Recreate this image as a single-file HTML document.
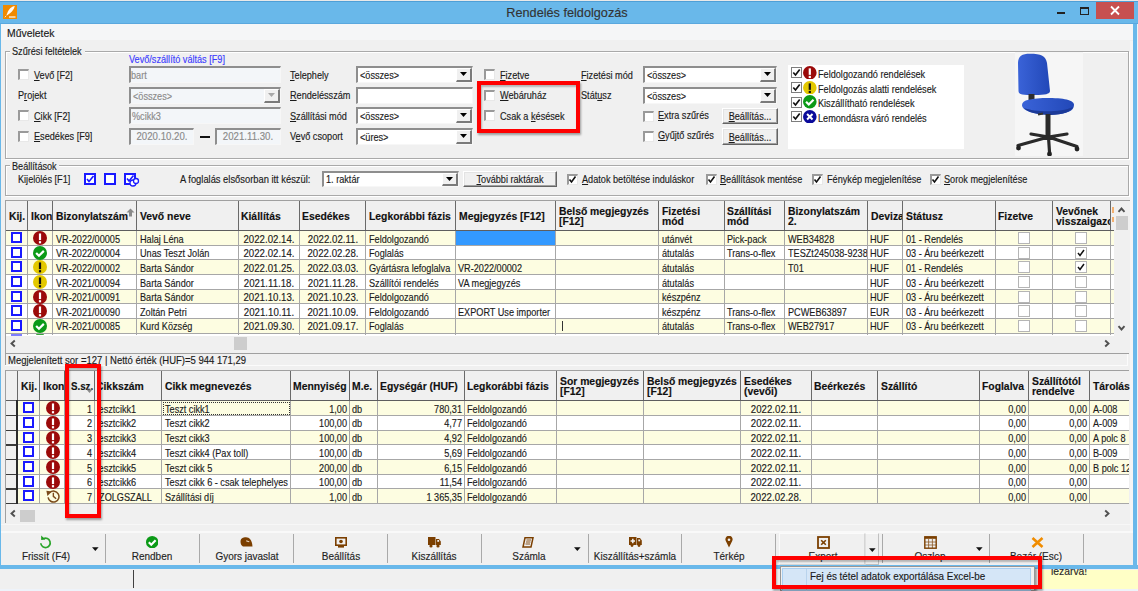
<!DOCTYPE html><html><head><meta charset="utf-8"><style>
html,body{margin:0;padding:0;}
body{width:1138px;height:591px;position:relative;overflow:hidden;background:#f0f0f0;font-family:"Liberation Sans",sans-serif;}
.t{position:absolute;white-space:nowrap;line-height:1;-webkit-text-stroke:0.15px currentColor;}
.t u{text-decoration:underline;text-underline-offset:1px;}
div{box-sizing:border-box;}
</style></head><body>
<div style="position:absolute;left:0px;top:0px;width:1138px;height:1px;background:#e9e9e9"></div>
<div style="position:absolute;left:0px;top:1px;width:1138px;height:23px;background:#69b8ea;border-top:1px solid #4f9fd6;border-bottom:1px solid #5aa8de"></div>
<div style="position:absolute;left:0px;top:24px;width:1px;height:545px;background:#69b8ea"></div>
<div style="position:absolute;left:1133px;top:24px;width:4px;height:545px;background:#69b8ea"></div>
<div style="position:absolute;left:1137px;top:24px;width:1px;height:567px;background:#eef2f6"></div>
<div style="position:absolute;left:0px;top:565px;width:1138px;height:4px;background:#69b8ea"></div>
<div style="position:absolute;left:3px;top:5px;width:14px;height:14px;background:#f08a00"></div>
<svg style="position:absolute;left:3px;top:5px" width="14" height="14"><path d="M11.8 1 C8.5 1.5 5.5 4 4 9 L3.2 10.5 L4.2 10.2 C5 9.5 6 9 7 8.2 C9.5 6.5 11 4 11.8 1Z" fill="#fff" opacity=".95"/><path d="M3 11 L1.8 12.2" stroke="#fff" stroke-width=".8"/><rect x="6" y="11.2" width="6.5" height="1.6" fill="#fff" opacity=".75"/></svg>
<div class="t" style="left:67px;width:1000px;text-align:center;transform-origin:50% 0;top:6.05px;font-size:13.5px;color:#333;transform:scaleX(0.94);">Rendelés feldolgozás</div>
<div style="position:absolute;left:1057px;top:12px;width:8px;height:2px;background:#222"></div>
<div style="position:absolute;left:1080px;top:7px;width:9px;height:8px;border:1px solid #222;border-top-width:2px"></div>
<div style="position:absolute;left:1096px;top:2px;width:38px;height:17px;background:#c75050"></div>
<svg style="position:absolute;left:1109px;top:5px" width="12" height="11"><path d="M2 1.5 L10 9.5 M10 1.5 L2 9.5" stroke="#fff" stroke-width="1.8"/></svg>
<div style="position:absolute;left:1px;top:24px;width:1132px;height:16px;background:#f5f6f7"></div>
<div class="t" style="left:7px;transform-origin:0 0;top:27.60px;font-size:10.5px;color:#1b1b1b;transform:scaleX(0.99);">Műveletek</div>
<div style="position:absolute;left:5px;top:50.5px;width:1124px;height:108px;border:1px solid #a9a9a9;box-shadow:inset 1px 1px 0 #fff, 1px 1px 0 #fff"></div>
<div style="position:absolute;left:10px;top:47.5px;width:75px;height:6px;background:#f0f0f0"></div>
<div class="t" style="left:12px;transform-origin:0 0;top:45.80px;font-size:10.5px;color:#1b1b1b;transform:scaleX(0.87);">Szűrési feltételek</div>
<div class="t" style="left:128.7px;transform-origin:0 0;top:54.10px;font-size:10.5px;color:#3c3cff;transform:scaleX(0.87);">Vevő/szállító váltás [F9]</div>
<div style="position:absolute;left:18px;top:69px;width:11px;height:11px;background:#fff;border-top:2px solid #9a9a9a;border-left:2px solid #9a9a9a;border-right:1px solid #e8e8e8;border-bottom:1px solid #e8e8e8"></div>
<div class="t" style="left:34px;transform-origin:0 0;top:69.60px;font-size:10.5px;color:#1b1b1b;transform:scaleX(0.87);"><u>V</u>evő [F2]</div>
<div class="t" style="left:18px;transform-origin:0 0;top:89.60px;font-size:10.5px;color:#1b1b1b;transform:scaleX(0.87);">P<u>r</u>ojekt</div>
<div style="position:absolute;left:18px;top:110px;width:11px;height:11px;background:#fff;border-top:2px solid #9a9a9a;border-left:2px solid #9a9a9a;border-right:1px solid #e8e8e8;border-bottom:1px solid #e8e8e8"></div>
<div class="t" style="left:34px;transform-origin:0 0;top:110.60px;font-size:10.5px;color:#1b1b1b;transform:scaleX(0.87);"><u>C</u>ikk [F2]</div>
<div style="position:absolute;left:18px;top:131px;width:11px;height:11px;background:#fff;border-top:2px solid #9a9a9a;border-left:2px solid #9a9a9a;border-right:1px solid #e8e8e8;border-bottom:1px solid #e8e8e8"></div>
<div class="t" style="left:34px;transform-origin:0 0;top:131.10px;font-size:10.5px;color:#1b1b1b;transform:scaleX(0.87);"><u>E</u>sedékes [F9]</div>
<div style="position:absolute;left:129px;top:66px;width:152px;height:17px;background:#f3f6f9;border-top:2px solid #8e8e8e;border-left:2px solid #8e8e8e;border-right:1px solid #f7f7f7;border-bottom:1px solid #f7f7f7"></div>
<div class="t" style="left:131px;transform-origin:0 0;top:69.60px;font-size:10.5px;color:#8a8a8a;transform:scaleX(0.87);">bart</div>
<div style="position:absolute;left:129px;top:87px;width:152px;height:17px;background:#f3f6f9;border-top:2px solid #8e8e8e;border-left:2px solid #8e8e8e;border-right:1px solid #f7f7f7;border-bottom:1px solid #f7f7f7"></div>
<div style="position:absolute;left:264px;top:89px;width:16px;height:14px;background:#f0f0f0;border-top:1px solid #fff;border-left:1px solid #fff;border-right:2px solid #7a7a7a;border-bottom:2px solid #7a7a7a"></div>
<svg style="position:absolute;left:267.5px;top:93.0px" width="8" height="5"><path d="M0 0 H7 L3.5 4Z" fill="#a8a8a8"/></svg>
<div class="t" style="left:133px;transform-origin:0 0;top:90.60px;font-size:10.5px;color:#8a8a8a;transform:scaleX(0.87);">&lt;összes&gt;</div>
<div style="position:absolute;left:129px;top:107px;width:152px;height:17px;background:#f3f6f9;border-top:2px solid #8e8e8e;border-left:2px solid #8e8e8e;border-right:1px solid #f7f7f7;border-bottom:1px solid #f7f7f7"></div>
<div class="t" style="left:131.5px;transform-origin:0 0;top:110.60px;font-size:10.5px;color:#8a8a8a;transform:scaleX(0.87);">%cikk3</div>
<div style="position:absolute;left:129px;top:128px;width:65px;height:17px;background:#f3f6f9;border-top:2px solid #8e8e8e;border-left:2px solid #8e8e8e;border-right:1px solid #f7f7f7;border-bottom:1px solid #f7f7f7"></div>
<div class="t" style="left:-338.5px;width:1000px;text-align:center;transform-origin:50% 0;top:131.10px;font-size:10.5px;color:#8a8a8a;transform:scaleX(0.92);">2020.10.20.</div>
<div style="position:absolute;left:200px;top:136px;width:10px;height:2px;background:#111"></div>
<div style="position:absolute;left:215px;top:128px;width:66px;height:17px;background:#f3f6f9;border-top:2px solid #8e8e8e;border-left:2px solid #8e8e8e;border-right:1px solid #f7f7f7;border-bottom:1px solid #f7f7f7"></div>
<div class="t" style="left:-252px;width:1000px;text-align:center;transform-origin:50% 0;top:131.10px;font-size:10.5px;color:#8a8a8a;transform:scaleX(0.92);">2021.11.30.</div>
<div class="t" style="left:290px;transform-origin:0 0;top:69.60px;font-size:10.5px;color:#1b1b1b;transform:scaleX(0.87);"><u>T</u>elephely</div>
<div class="t" style="left:290px;transform-origin:0 0;top:90.10px;font-size:10.5px;color:#1b1b1b;transform:scaleX(0.87);"><u>R</u>endelésszám</div>
<div class="t" style="left:290px;transform-origin:0 0;top:110.60px;font-size:10.5px;color:#1b1b1b;transform:scaleX(0.87);"><u>S</u>zállítási mód</div>
<div class="t" style="left:290px;transform-origin:0 0;top:131.10px;font-size:10.5px;color:#1b1b1b;transform:scaleX(0.87);">V<u>e</u>vő csoport</div>
<div style="position:absolute;left:356px;top:66px;width:117px;height:17px;background:#fff;border-top:2px solid #8e8e8e;border-left:2px solid #8e8e8e;border-right:1px solid #f7f7f7;border-bottom:1px solid #f7f7f7"></div>
<div style="position:absolute;left:456px;top:68px;width:16px;height:14px;background:#f0f0f0;border-top:1px solid #fff;border-left:1px solid #fff;border-right:2px solid #7a7a7a;border-bottom:2px solid #7a7a7a"></div>
<svg style="position:absolute;left:459.5px;top:72.0px" width="8" height="5"><path d="M0 0 H7 L3.5 4Z" fill="#000"/></svg>
<div class="t" style="left:360px;transform-origin:0 0;top:69.60px;font-size:10.5px;color:#1b1b1b;transform:scaleX(0.87);">&lt;összes&gt;</div>
<div style="position:absolute;left:356px;top:87px;width:117px;height:17px;background:#fff;border-top:2px solid #8e8e8e;border-left:2px solid #8e8e8e;border-right:1px solid #f7f7f7;border-bottom:1px solid #f7f7f7"></div>
<div style="position:absolute;left:356px;top:107px;width:117px;height:17px;background:#fff;border-top:2px solid #8e8e8e;border-left:2px solid #8e8e8e;border-right:1px solid #f7f7f7;border-bottom:1px solid #f7f7f7"></div>
<div style="position:absolute;left:456px;top:109px;width:16px;height:14px;background:#f0f0f0;border-top:1px solid #fff;border-left:1px solid #fff;border-right:2px solid #7a7a7a;border-bottom:2px solid #7a7a7a"></div>
<svg style="position:absolute;left:459.5px;top:113.0px" width="8" height="5"><path d="M0 0 H7 L3.5 4Z" fill="#000"/></svg>
<div class="t" style="left:360px;transform-origin:0 0;top:110.60px;font-size:10.5px;color:#1b1b1b;transform:scaleX(0.87);">&lt;összes&gt;</div>
<div style="position:absolute;left:356px;top:128px;width:117px;height:17px;background:#fff;border-top:2px solid #8e8e8e;border-left:2px solid #8e8e8e;border-right:1px solid #f7f7f7;border-bottom:1px solid #f7f7f7"></div>
<div style="position:absolute;left:456px;top:130px;width:16px;height:14px;background:#f0f0f0;border-top:1px solid #fff;border-left:1px solid #fff;border-right:2px solid #7a7a7a;border-bottom:2px solid #7a7a7a"></div>
<svg style="position:absolute;left:459.5px;top:134.0px" width="8" height="5"><path d="M0 0 H7 L3.5 4Z" fill="#000"/></svg>
<div class="t" style="left:360px;transform-origin:0 0;top:131.60px;font-size:10.5px;color:#1b1b1b;transform:scaleX(0.87);">&lt;üres&gt;</div>
<div style="position:absolute;left:484px;top:69px;width:11px;height:11px;background:#fff;border-top:2px solid #9a9a9a;border-left:2px solid #9a9a9a;border-right:1px solid #e8e8e8;border-bottom:1px solid #e8e8e8"></div>
<div class="t" style="left:500px;transform-origin:0 0;top:69.60px;font-size:10.5px;color:#1b1b1b;transform:scaleX(0.87);"><u>F</u>izetve</div>
<div style="position:absolute;left:484px;top:90px;width:11px;height:11px;background:#fff;border-top:2px solid #9a9a9a;border-left:2px solid #9a9a9a;border-right:1px solid #e8e8e8;border-bottom:1px solid #e8e8e8"></div>
<div class="t" style="left:500px;transform-origin:0 0;top:90.10px;font-size:10.5px;color:#1b1b1b;transform:scaleX(0.87);"><u>W</u>ebáruház</div>
<div style="position:absolute;left:484px;top:110px;width:11px;height:11px;background:#fff;border-top:2px solid #9a9a9a;border-left:2px solid #9a9a9a;border-right:1px solid #e8e8e8;border-bottom:1px solid #e8e8e8"></div>
<div class="t" style="left:500px;transform-origin:0 0;top:110.60px;font-size:10.5px;color:#1b1b1b;transform:scaleX(0.87);">Csak a <u>k</u>ésések</div>
<div class="t" style="left:580.5px;transform-origin:0 0;top:69.60px;font-size:10.5px;color:#1b1b1b;transform:scaleX(0.87);"><u>F</u>izetési mód</div>
<div class="t" style="left:580.5px;transform-origin:0 0;top:90.10px;font-size:10.5px;color:#1b1b1b;transform:scaleX(0.87);">Stát<u>u</u>sz</div>
<div style="position:absolute;left:643px;top:66px;width:134px;height:17px;background:#fff;border-top:2px solid #8e8e8e;border-left:2px solid #8e8e8e;border-right:1px solid #f7f7f7;border-bottom:1px solid #f7f7f7"></div>
<div style="position:absolute;left:760px;top:68px;width:16px;height:14px;background:#f0f0f0;border-top:1px solid #fff;border-left:1px solid #fff;border-right:2px solid #7a7a7a;border-bottom:2px solid #7a7a7a"></div>
<svg style="position:absolute;left:763.5px;top:72.0px" width="8" height="5"><path d="M0 0 H7 L3.5 4Z" fill="#000"/></svg>
<div class="t" style="left:647px;transform-origin:0 0;top:69.60px;font-size:10.5px;color:#1b1b1b;transform:scaleX(0.87);">&lt;összes&gt;</div>
<div style="position:absolute;left:643px;top:87px;width:134px;height:17px;background:#fff;border-top:2px solid #8e8e8e;border-left:2px solid #8e8e8e;border-right:1px solid #f7f7f7;border-bottom:1px solid #f7f7f7"></div>
<div style="position:absolute;left:760px;top:89px;width:16px;height:14px;background:#f0f0f0;border-top:1px solid #fff;border-left:1px solid #fff;border-right:2px solid #7a7a7a;border-bottom:2px solid #7a7a7a"></div>
<svg style="position:absolute;left:763.5px;top:93.0px" width="8" height="5"><path d="M0 0 H7 L3.5 4Z" fill="#000"/></svg>
<div class="t" style="left:647px;transform-origin:0 0;top:90.60px;font-size:10.5px;color:#1b1b1b;transform:scaleX(0.87);">&lt;összes&gt;</div>
<div style="position:absolute;left:643px;top:111px;width:11px;height:11px;background:#fff;border-top:2px solid #9a9a9a;border-left:2px solid #9a9a9a;border-right:1px solid #e8e8e8;border-bottom:1px solid #e8e8e8"></div>
<div class="t" style="left:657.8px;transform-origin:0 0;top:109.70px;font-size:10.5px;color:#1b1b1b;transform:scaleX(0.87);"><u>E</u>xtra szűrés</div>
<div style="position:absolute;left:643px;top:131px;width:11px;height:11px;background:#fff;border-top:2px solid #9a9a9a;border-left:2px solid #9a9a9a;border-right:1px solid #e8e8e8;border-bottom:1px solid #e8e8e8"></div>
<div class="t" style="left:657.8px;transform-origin:0 0;top:130.10px;font-size:10.5px;color:#1b1b1b;transform:scaleX(0.87);"><u>G</u>yűjtő szűrés</div>
<div style="position:absolute;left:722px;top:108px;width:56px;height:16px;background:#f0f0f0;border-top:1px solid #fff;border-left:1px solid #fff;border-right:1px solid #646464;border-bottom:1px solid #646464;box-shadow:inset -1px -1px 0 #a0a0a0, inset 1px 1px 0 #e3e3e3"></div>
<div class="t" style="left:250.0px;width:1000px;text-align:center;transform-origin:50% 0;top:111.30px;font-size:10.5px;color:#1b1b1b;transform:scaleX(0.87);"><u>B</u>eállítás...</div>
<div style="position:absolute;left:722px;top:128px;width:56px;height:17px;background:#f0f0f0;border-top:1px solid #fff;border-left:1px solid #fff;border-right:1px solid #646464;border-bottom:1px solid #646464;box-shadow:inset -1px -1px 0 #a0a0a0, inset 1px 1px 0 #e3e3e3"></div>
<div class="t" style="left:250.0px;width:1000px;text-align:center;transform-origin:50% 0;top:132.30px;font-size:10.5px;color:#1b1b1b;transform:scaleX(0.87);"><u>B</u>eállítás...</div>
<div style="position:absolute;left:788px;top:65px;width:176px;height:84px;background:#fff"></div>
<div style="position:absolute;left:791px;top:67px;width:11px;height:11px;background:#fff;border:1.5px solid #7d7d7d"></div>
<svg style="position:absolute;left:791px;top:67px" width="11" height="11"><path d="M2.3 5.5 L4.5 8 L8.7 2.6" stroke="#111" stroke-width="1.7" fill="none"/></svg>
<svg style="position:absolute;left:803.20px;top:65.80px" width="13.60" height="13.60"><circle cx="6.8" cy="6.8" r="6.8" fill="#9b0a0a"/><rect x="5.699999999999999" y="2.38" width="2.2" height="6.46" fill="#fff"/><rect x="5.699999999999999" y="9.86" width="2.2" height="2.2" fill="#fff"/></svg>
<div class="t" style="left:818px;transform-origin:0 0;top:68.90px;font-size:10.5px;color:#1b1b1b;transform:scaleX(0.87);">Feldolgozandó rendelések</div>
<div style="position:absolute;left:791px;top:82px;width:11px;height:11px;background:#fff;border:1.5px solid #7d7d7d"></div>
<svg style="position:absolute;left:791px;top:82px" width="11" height="11"><path d="M2.3 5.5 L4.5 8 L8.7 2.6" stroke="#111" stroke-width="1.7" fill="none"/></svg>
<svg style="position:absolute;left:803.20px;top:80.50px" width="13.60" height="13.60"><circle cx="6.8" cy="6.8" r="6.8" fill="#e3c800"/><rect x="5.699999999999999" y="2.38" width="2.2" height="6.46" fill="#111"/><rect x="5.699999999999999" y="9.86" width="2.2" height="2.2" fill="#111"/></svg>
<div class="t" style="left:818px;transform-origin:0 0;top:83.60px;font-size:10.5px;color:#1b1b1b;transform:scaleX(0.87);">Feldolgozás alatti rendelések</div>
<div style="position:absolute;left:791px;top:97px;width:11px;height:11px;background:#fff;border:1.5px solid #7d7d7d"></div>
<svg style="position:absolute;left:791px;top:97px" width="11" height="11"><path d="M2.3 5.5 L4.5 8 L8.7 2.6" stroke="#111" stroke-width="1.7" fill="none"/></svg>
<svg style="position:absolute;left:803.20px;top:95.20px" width="13.60" height="13.60"><circle cx="6.8" cy="6.8" r="6.8" fill="#0b9a17"/><path d="M3.06 6.8 L5.779999999999999 9.52 L10.54 4.76" stroke="#fff" stroke-width="2.2" fill="none"/></svg>
<div class="t" style="left:818px;transform-origin:0 0;top:98.30px;font-size:10.5px;color:#1b1b1b;transform:scaleX(0.87);">Kiszállítható rendelések</div>
<div style="position:absolute;left:791px;top:111px;width:11px;height:11px;background:#fff;border:1.5px solid #7d7d7d"></div>
<svg style="position:absolute;left:791px;top:111px" width="11" height="11"><path d="M2.3 5.5 L4.5 8 L8.7 2.6" stroke="#111" stroke-width="1.7" fill="none"/></svg>
<svg style="position:absolute;left:803.20px;top:109.90px" width="13.60" height="13.60"><circle cx="6.8" cy="6.8" r="6.8" fill="#0a0a9a"/><path d="M4.08 4.08 L9.52 9.52 M9.52 4.08 L4.08 9.52" stroke="#fff" stroke-width="2" fill="none"/></svg>
<div class="t" style="left:818px;transform-origin:0 0;top:113.00px;font-size:10.5px;color:#1b1b1b;transform:scaleX(0.87);">Lemondásra váró rendelés</div>
<div style="position:absolute;left:1015px;top:52px;width:68px;height:104px;background:#f6f6f6"></div>
<svg style="position:absolute;left:1015px;top:51px" width="68" height="105"><defs><linearGradient id="cb" x1="0" y1="0" x2="1" y2="0"><stop offset="0" stop-color="#3a63d8"/><stop offset="1" stop-color="#2248b8"/></linearGradient></defs><path d="M3 12 C3 5 7 2.7 15 2.7 C26 2.7 31 5 32 12 L35 40 C35 43 30 44 20 44 C8 44 3.5 44 3.5 40 Z" fill="url(#cb)"/><rect x="13.5" y="43" width="6" height="7" fill="#2e2e2e"/><path d="M7 54 C7 49 16 47 34 47 C52 47 59 50 59 54 C59 60 52 63 38 63.5 C20 64 7 60 7 54Z" fill="url(#cb)"/><path d="M9 57 C20 61 45 62 58 56 C56 61 48 63.5 36 64 C22 64 12 61 9 57Z" fill="#1c3a98"/><path d="M23 63.5 L28 62.5" stroke="#333" stroke-width="2.2"/><rect x="30.5" y="63" width="5" height="23" fill="#2a2a2a"/><path d="M33.5 86 L3 94.5 M33.5 86 L34.5 101 M33.5 86 L62 95.5 M33.5 86 L52 83 M33.5 86 L16 83" stroke="#2a2a2a" stroke-width="3.2" fill="none" stroke-linecap="round"/><circle cx="3.5" cy="97" r="2.4" fill="#222"/><circle cx="34.5" cy="103" r="2.4" fill="#222"/><circle cx="62" cy="98" r="2.4" fill="#222"/></svg>
<div style="position:absolute;left:5px;top:165px;width:1124px;height:31px;border:1px solid #a9a9a9;box-shadow:inset 1px 1px 0 #fff, 1px 1px 0 #fff"></div>
<div style="position:absolute;left:10px;top:162px;width:49px;height:6px;background:#f0f0f0"></div>
<div class="t" style="left:12px;transform-origin:0 0;top:160.60px;font-size:10.5px;color:#1b1b1b;transform:scaleX(0.87);">Beállítások</div>
<div class="t" style="left:18px;transform-origin:0 0;top:174.10px;font-size:10.5px;color:#1b1b1b;transform:scaleX(0.87);">Kijelölés [F1]</div>
<div style="position:absolute;left:84px;top:173px;width:11.5px;height:11.5px;background:#fff;border:2px solid #1a1aff"></div>
<svg style="position:absolute;left:84px;top:173px" width="12" height="12"><path d="M3 6 L5 8.5 L9.5 3" stroke="#1a1aff" stroke-width="1.6" fill="none"/></svg>
<div style="position:absolute;left:104px;top:173px;width:11.5px;height:11.5px;background:#fff;border:2px solid #1a1aff"></div>
<div style="position:absolute;left:124px;top:173px;width:11.5px;height:11.5px;background:#fff;border:2px solid #1a1aff"></div>
<svg style="position:absolute;left:124px;top:173px" width="16" height="16"><path d="M3 5.5 L5 8 L9.5 2.5" stroke="#1a1aff" stroke-width="1.6" fill="none"/><circle cx="9" cy="10" r="3" fill="#fff" stroke="#1a1aff" stroke-width="1.3"/><circle cx="12" cy="8" r="2.5" fill="#fff" stroke="#1a1aff" stroke-width="1.3"/></svg>
<div class="t" style="left:180.3px;transform-origin:0 0;top:174.10px;font-size:10.5px;color:#1b1b1b;transform:scaleX(0.89);">A foglalás elsősorban itt készül:</div>
<div style="position:absolute;left:322px;top:171px;width:137px;height:16px;background:#fff;border-top:2px solid #8e8e8e;border-left:2px solid #8e8e8e;border-right:1px solid #f7f7f7;border-bottom:1px solid #f7f7f7"></div>
<div style="position:absolute;left:442px;top:173px;width:16px;height:13px;background:#f0f0f0;border-top:1px solid #fff;border-left:1px solid #fff;border-right:2px solid #7a7a7a;border-bottom:2px solid #7a7a7a"></div>
<svg style="position:absolute;left:445.5px;top:176.5px" width="8" height="5"><path d="M0 0 H7 L3.5 4Z" fill="#000"/></svg>
<div class="t" style="left:326px;transform-origin:0 0;top:173.60px;font-size:10.5px;color:#1b1b1b;transform:scaleX(0.87);">1. raktár</div>
<div style="position:absolute;left:463px;top:171px;width:94px;height:16px;background:#f0f0f0;border-top:1px solid #fff;border-left:1px solid #fff;border-right:1px solid #646464;border-bottom:1px solid #646464;box-shadow:inset -1px -1px 0 #a0a0a0, inset 1px 1px 0 #e3e3e3"></div>
<div class="t" style="left:10.0px;width:1000px;text-align:center;transform-origin:50% 0;top:174.30px;font-size:10.5px;color:#1b1b1b;transform:scaleX(0.87);"><u>T</u>ovábbi raktárak</div>
<div style="position:absolute;left:567px;top:174px;width:11px;height:11px;background:#fff;border-top:2px solid #9a9a9a;border-left:2px solid #9a9a9a;border-right:1px solid #e8e8e8;border-bottom:1px solid #e8e8e8"></div>
<svg style="position:absolute;left:567px;top:174px" width="11" height="11"><path d="M2.5 5.5 L4.5 8 L8.5 2.5" stroke="#111" stroke-width="1.6" fill="none"/></svg>
<div class="t" style="left:582.1px;transform-origin:0 0;top:173.60px;font-size:10.5px;color:#1b1b1b;transform:scaleX(0.87);"><u>A</u>datok betöltése induláskor</div>
<div style="position:absolute;left:706px;top:174px;width:11px;height:11px;background:#fff;border-top:2px solid #9a9a9a;border-left:2px solid #9a9a9a;border-right:1px solid #e8e8e8;border-bottom:1px solid #e8e8e8"></div>
<svg style="position:absolute;left:706px;top:174px" width="11" height="11"><path d="M2.5 5.5 L4.5 8 L8.5 2.5" stroke="#111" stroke-width="1.6" fill="none"/></svg>
<div class="t" style="left:720px;transform-origin:0 0;top:173.60px;font-size:10.5px;color:#1b1b1b;transform:scaleX(0.87);"><u>B</u>eállítások mentése</div>
<div style="position:absolute;left:812px;top:174px;width:11px;height:11px;background:#fff;border-top:2px solid #9a9a9a;border-left:2px solid #9a9a9a;border-right:1px solid #e8e8e8;border-bottom:1px solid #e8e8e8"></div>
<svg style="position:absolute;left:812px;top:174px" width="11" height="11"><path d="M2.5 5.5 L4.5 8 L8.5 2.5" stroke="#111" stroke-width="1.6" fill="none"/></svg>
<div class="t" style="left:826.5px;transform-origin:0 0;top:173.60px;font-size:10.5px;color:#1b1b1b;transform:scaleX(0.87);">Fénykép megjelenítése</div>
<div style="position:absolute;left:930px;top:174px;width:11px;height:11px;background:#fff;border-top:2px solid #9a9a9a;border-left:2px solid #9a9a9a;border-right:1px solid #e8e8e8;border-bottom:1px solid #e8e8e8"></div>
<svg style="position:absolute;left:930px;top:174px" width="11" height="11"><path d="M2.5 5.5 L4.5 8 L8.5 2.5" stroke="#111" stroke-width="1.6" fill="none"/></svg>
<div class="t" style="left:944.3px;transform-origin:0 0;top:173.60px;font-size:10.5px;color:#1b1b1b;transform:scaleX(0.87);"><u>S</u>orok megjelenítése</div>
<div style="position:absolute;left:5.00px;top:200.10px;width:1125.00px;height:153.90px;background:#f0f0f0;border-left:1px solid #a0a0a0;border-top:1px solid #a0a0a0"></div>
<div style="position:absolute;left:6.00px;top:201.10px;width:1108.00px;height:29.10px;background:#f0f0f0"></div>
<div style="position:absolute;left:6.00px;top:229.70px;width:1108.00px;height:1.50px;background:#5e5e5e"></div>
<div style="position:absolute;left:6.00px;top:231.20px;width:1108.00px;height:14.00px;background:#fdfde1"></div>
<div style="position:absolute;left:6.00px;top:245.70px;width:1108.00px;height:14.10px;background:#fff"></div>
<div style="position:absolute;left:6.00px;top:260.30px;width:1108.00px;height:14.20px;background:#fdfde1"></div>
<div style="position:absolute;left:6.00px;top:275.00px;width:1108.00px;height:14.20px;background:#fff"></div>
<div style="position:absolute;left:6.00px;top:289.70px;width:1108.00px;height:14.10px;background:#fdfde1"></div>
<div style="position:absolute;left:6.00px;top:304.30px;width:1108.00px;height:14.10px;background:#fff"></div>
<div style="position:absolute;left:6.00px;top:318.90px;width:1108.00px;height:14.30px;background:#fdfde1"></div>
<div style="position:absolute;left:6.00px;top:333.50px;width:1108.00px;height:2.00px;background:#fff"></div>
<div style="position:absolute;left:6.00px;top:244.70px;width:1108.00px;height:1.00px;background:#a7a7a7"></div>
<div style="position:absolute;left:6.00px;top:259.30px;width:1108.00px;height:1.00px;background:#a7a7a7"></div>
<div style="position:absolute;left:6.00px;top:274.00px;width:1108.00px;height:1.00px;background:#a7a7a7"></div>
<div style="position:absolute;left:6.00px;top:288.70px;width:1108.00px;height:1.00px;background:#a7a7a7"></div>
<div style="position:absolute;left:6.00px;top:303.30px;width:1108.00px;height:1.00px;background:#a7a7a7"></div>
<div style="position:absolute;left:6.00px;top:317.90px;width:1108.00px;height:1.00px;background:#a7a7a7"></div>
<div style="position:absolute;left:6.00px;top:332.70px;width:1108.00px;height:1.00px;background:#a7a7a7"></div>
<div style="position:absolute;left:26.50px;top:201.10px;width:1.00px;height:29.10px;background:#6a6a6a"></div>
<div style="position:absolute;left:26.50px;top:231.20px;width:1.00px;height:104.30px;background:#a7a7a7"></div>
<div style="position:absolute;left:52.00px;top:201.10px;width:1.00px;height:29.10px;background:#6a6a6a"></div>
<div style="position:absolute;left:52.00px;top:231.20px;width:1.00px;height:104.30px;background:#a7a7a7"></div>
<div style="position:absolute;left:136.30px;top:201.10px;width:1.00px;height:29.10px;background:#6a6a6a"></div>
<div style="position:absolute;left:136.30px;top:231.20px;width:1.00px;height:104.30px;background:#a7a7a7"></div>
<div style="position:absolute;left:237.50px;top:201.10px;width:1.00px;height:29.10px;background:#6a6a6a"></div>
<div style="position:absolute;left:237.50px;top:231.20px;width:1.00px;height:104.30px;background:#a7a7a7"></div>
<div style="position:absolute;left:298.80px;top:201.10px;width:1.00px;height:29.10px;background:#6a6a6a"></div>
<div style="position:absolute;left:298.80px;top:231.20px;width:1.00px;height:104.30px;background:#a7a7a7"></div>
<div style="position:absolute;left:365.30px;top:201.10px;width:1.00px;height:29.10px;background:#6a6a6a"></div>
<div style="position:absolute;left:365.30px;top:231.20px;width:1.00px;height:104.30px;background:#a7a7a7"></div>
<div style="position:absolute;left:454.90px;top:201.10px;width:1.00px;height:29.10px;background:#6a6a6a"></div>
<div style="position:absolute;left:454.90px;top:231.20px;width:1.00px;height:104.30px;background:#a7a7a7"></div>
<div style="position:absolute;left:555.00px;top:201.10px;width:1.00px;height:29.10px;background:#6a6a6a"></div>
<div style="position:absolute;left:555.00px;top:231.20px;width:1.00px;height:104.30px;background:#a7a7a7"></div>
<div style="position:absolute;left:658.30px;top:201.10px;width:1.00px;height:29.10px;background:#6a6a6a"></div>
<div style="position:absolute;left:658.30px;top:231.20px;width:1.00px;height:104.30px;background:#a7a7a7"></div>
<div style="position:absolute;left:723.70px;top:201.10px;width:1.00px;height:29.10px;background:#6a6a6a"></div>
<div style="position:absolute;left:723.70px;top:231.20px;width:1.00px;height:104.30px;background:#a7a7a7"></div>
<div style="position:absolute;left:784.10px;top:201.10px;width:1.00px;height:29.10px;background:#6a6a6a"></div>
<div style="position:absolute;left:784.10px;top:231.20px;width:1.00px;height:104.30px;background:#a7a7a7"></div>
<div style="position:absolute;left:867.10px;top:201.10px;width:1.00px;height:29.10px;background:#6a6a6a"></div>
<div style="position:absolute;left:867.10px;top:231.20px;width:1.00px;height:104.30px;background:#a7a7a7"></div>
<div style="position:absolute;left:902.10px;top:201.10px;width:1.00px;height:29.10px;background:#6a6a6a"></div>
<div style="position:absolute;left:902.10px;top:231.20px;width:1.00px;height:104.30px;background:#a7a7a7"></div>
<div style="position:absolute;left:994.60px;top:201.10px;width:1.00px;height:29.10px;background:#6a6a6a"></div>
<div style="position:absolute;left:994.60px;top:231.20px;width:1.00px;height:104.30px;background:#a7a7a7"></div>
<div style="position:absolute;left:1052.20px;top:201.10px;width:1.00px;height:29.10px;background:#6a6a6a"></div>
<div style="position:absolute;left:1052.20px;top:231.20px;width:1.00px;height:104.30px;background:#a7a7a7"></div>
<div style="position:absolute;left:1110.40px;top:201.10px;width:1.00px;height:29.10px;background:#6a6a6a"></div>
<div style="position:absolute;left:1110.40px;top:231.20px;width:1.00px;height:104.30px;background:#a7a7a7"></div>
<div style="position:absolute;left:455.90px;top:231.20px;width:99.10px;height:13.50px;background:#3399ff"></div>
<div class="t" style="left:8.5px;transform-origin:0 0;top:211.34px;font-size:10.8px;color:#111;font-weight:bold;transform:scaleX(0.96);">Kij.</div>
<div style="position:absolute;left:28px;top:201px;width:24px;height:29px;overflow:hidden">
<div class="t" style="left:2.8px;transform-origin:0 0;top:10.34px;font-size:10.8px;color:#111;font-weight:bold;transform:scaleX(0.96);">Ikon</div>
</div>
<div class="t" style="left:55.5px;transform-origin:0 0;top:211.34px;font-size:10.8px;color:#111;font-weight:bold;transform:scaleX(0.96);">Bizonylatszám</div>
<svg style="position:absolute;left:126px;top:208px" width="9" height="9"><path d="M4.5 0.5 L8.5 4.5 H6 V8.5 H3 V4.5 H0.5Z" fill="#8a8a8a"/></svg>
<div class="t" style="left:139.5px;transform-origin:0 0;top:211.34px;font-size:10.8px;color:#111;font-weight:bold;transform:scaleX(0.96);">Vevő neve</div>
<div class="t" style="left:241px;transform-origin:0 0;top:211.34px;font-size:10.8px;color:#111;font-weight:bold;transform:scaleX(0.96);">Kiállítás</div>
<div class="t" style="left:302px;transform-origin:0 0;top:211.34px;font-size:10.8px;color:#111;font-weight:bold;transform:scaleX(0.96);">Esedékes</div>
<div class="t" style="left:368.5px;transform-origin:0 0;top:211.34px;font-size:10.8px;color:#111;font-weight:bold;transform:scaleX(0.96);">Legkorábbi fázis</div>
<div class="t" style="left:458.5px;transform-origin:0 0;top:211.34px;font-size:10.8px;color:#111;font-weight:bold;transform:scaleX(0.96);">Megjegyzés [F12]</div>
<div class="t" style="left:558.5px;transform-origin:0 0;top:205.84px;font-size:10.8px;color:#111;font-weight:bold;transform:scaleX(0.96);">Belső megjegyzés</div>
<div class="t" style="left:558.5px;transform-origin:0 0;top:216.24px;font-size:10.8px;color:#111;font-weight:bold;transform:scaleX(0.96);">[F12]</div>
<div class="t" style="left:661.5px;transform-origin:0 0;top:205.84px;font-size:10.8px;color:#111;font-weight:bold;transform:scaleX(0.96);">Fizetési</div>
<div class="t" style="left:661.5px;transform-origin:0 0;top:216.24px;font-size:10.8px;color:#111;font-weight:bold;transform:scaleX(0.96);">mód</div>
<div class="t" style="left:727px;transform-origin:0 0;top:205.84px;font-size:10.8px;color:#111;font-weight:bold;transform:scaleX(0.96);">Szállítási</div>
<div class="t" style="left:727px;transform-origin:0 0;top:216.24px;font-size:10.8px;color:#111;font-weight:bold;transform:scaleX(0.96);">mód</div>
<div class="t" style="left:787.5px;transform-origin:0 0;top:205.84px;font-size:10.8px;color:#111;font-weight:bold;transform:scaleX(0.96);">Bizonylatszám</div>
<div class="t" style="left:787.5px;transform-origin:0 0;top:216.24px;font-size:10.8px;color:#111;font-weight:bold;transform:scaleX(0.96);">2.</div>
<div style="position:absolute;left:868px;top:201px;width:34px;height:29px;overflow:hidden">
<div class="t" style="left:2.5px;transform-origin:0 0;top:10.34px;font-size:10.8px;color:#111;font-weight:bold;transform:scaleX(0.96);">Deviza</div>
</div>
<div class="t" style="left:905.5px;transform-origin:0 0;top:211.34px;font-size:10.8px;color:#111;font-weight:bold;transform:scaleX(0.96);">Státusz</div>
<div class="t" style="left:998px;transform-origin:0 0;top:211.34px;font-size:10.8px;color:#111;font-weight:bold;transform:scaleX(0.96);">Fizetve</div>
<div style="position:absolute;left:1053px;top:201px;width:57px;height:29px;overflow:hidden">
<div class="t" style="left:3px;transform-origin:0 0;top:4.84px;font-size:10.8px;color:#111;font-weight:bold;transform:scaleX(0.96);">Vevőnek</div>
<div class="t" style="left:3px;transform-origin:0 0;top:15.24px;font-size:10.8px;color:#111;font-weight:bold;transform:scaleX(0.96);">visszaigazolva</div>
</div>
<div style="position:absolute;left:1112.00px;top:207.00px;width:1.50px;height:6.00px;background:#f3b070"></div>
<div style="position:absolute;left:1112.00px;top:217.00px;width:1.50px;height:5.00px;background:#f3b070"></div>
<div style="position:absolute;left:10.5px;top:232px;width:11px;height:11px;background:#fff;border:2px solid #1a1aff"></div>
<svg style="position:absolute;left:33.00px;top:231.10px" width="14.00" height="14.00"><circle cx="7.0" cy="7.0" r="7.0" fill="#9b0a0a"/><rect x="5.9" y="2.4499999999999997" width="2.2" height="6.6499999999999995" fill="#fff"/><rect x="5.9" y="10.15" width="2.2" height="2.2" fill="#fff"/></svg>
<div class="t" style="left:55.5px;transform-origin:0 0;top:233.70px;font-size:10.5px;color:#1b1b1b;transform:scaleX(0.87);">VR-2022/00005</div>
<div class="t" style="left:139.5px;transform-origin:0 0;top:233.70px;font-size:10.5px;color:#1b1b1b;transform:scaleX(0.87);">Halaj Léna</div>
<div class="t" style="left:-231.5px;width:1000px;text-align:center;transform-origin:50% 0;top:233.70px;font-size:10.5px;color:#1b1b1b;transform:scaleX(0.92);">2022.02.14.</div>
<div class="t" style="left:-167.5px;width:1000px;text-align:center;transform-origin:50% 0;top:233.70px;font-size:10.5px;color:#1b1b1b;transform:scaleX(0.92);">2022.02.11.</div>
<div class="t" style="left:368.5px;transform-origin:0 0;top:233.70px;font-size:10.5px;color:#1b1b1b;transform:scaleX(0.87);">Feldolgozandó</div>
<div class="t" style="left:458px;transform-origin:0 0;top:233.70px;font-size:10.5px;color:#1b1b1b;transform:scaleX(0.87);"></div>
<div class="t" style="left:661.5px;transform-origin:0 0;top:233.70px;font-size:10.5px;color:#1b1b1b;transform:scaleX(0.87);">utánvét</div>
<div class="t" style="left:726.8px;transform-origin:0 0;top:233.70px;font-size:10.5px;color:#1b1b1b;transform:scaleX(0.87);">Pick-pack</div>
<div style="position:absolute;left:785px;top:230.70px;width:82px;height:14px;overflow:hidden">
<div class="t" style="left:2.5px;transform-origin:0 0;top:3.00px;font-size:10.5px;color:#1b1b1b;transform:scaleX(0.87);">WEB34828</div>
</div>
<div class="t" style="left:870px;transform-origin:0 0;top:233.70px;font-size:10.5px;color:#1b1b1b;transform:scaleX(0.87);">HUF</div>
<div class="t" style="left:905.5px;transform-origin:0 0;top:233.70px;font-size:10.5px;color:#1b1b1b;transform:scaleX(0.87);">01 - Rendelés</div>
<div style="position:absolute;left:1018px;top:232px;width:12px;height:12px;background:#fff;border:1px solid #b5b5b5"></div>
<div style="position:absolute;left:1075px;top:232px;width:12px;height:12px;background:#fff;border:1px solid #b5b5b5"></div>
<div style="position:absolute;left:10.5px;top:247px;width:11px;height:11px;background:#fff;border:2px solid #1a1aff"></div>
<svg style="position:absolute;left:33.00px;top:245.60px" width="14.00" height="14.00"><circle cx="7.0" cy="7.0" r="7.0" fill="#0b9a17"/><path d="M3.15 7.0 L5.95 9.799999999999999 L10.85 4.8999999999999995" stroke="#fff" stroke-width="2.2" fill="none"/></svg>
<div class="t" style="left:55.5px;transform-origin:0 0;top:248.20px;font-size:10.5px;color:#1b1b1b;transform:scaleX(0.87);">VR-2022/00004</div>
<div class="t" style="left:139.5px;transform-origin:0 0;top:248.20px;font-size:10.5px;color:#1b1b1b;transform:scaleX(0.87);">Unas Teszt Jolán</div>
<div class="t" style="left:-231.5px;width:1000px;text-align:center;transform-origin:50% 0;top:248.20px;font-size:10.5px;color:#1b1b1b;transform:scaleX(0.92);">2022.02.14.</div>
<div class="t" style="left:-167.5px;width:1000px;text-align:center;transform-origin:50% 0;top:248.20px;font-size:10.5px;color:#1b1b1b;transform:scaleX(0.92);">2022.02.28.</div>
<div class="t" style="left:368.5px;transform-origin:0 0;top:248.20px;font-size:10.5px;color:#1b1b1b;transform:scaleX(0.87);">Foglalás</div>
<div class="t" style="left:458px;transform-origin:0 0;top:248.20px;font-size:10.5px;color:#1b1b1b;transform:scaleX(0.87);"></div>
<div class="t" style="left:661.5px;transform-origin:0 0;top:248.20px;font-size:10.5px;color:#1b1b1b;transform:scaleX(0.87);">átutalás</div>
<div class="t" style="left:726.8px;transform-origin:0 0;top:248.20px;font-size:10.5px;color:#1b1b1b;transform:scaleX(0.87);">Trans-o-flex</div>
<div style="position:absolute;left:785px;top:245.20px;width:82px;height:14px;overflow:hidden">
<div class="t" style="left:2.5px;transform-origin:0 0;top:3.00px;font-size:10.5px;color:#1b1b1b;transform:scaleX(0.87);">TESZt245038-9238</div>
</div>
<div class="t" style="left:870px;transform-origin:0 0;top:248.20px;font-size:10.5px;color:#1b1b1b;transform:scaleX(0.87);">HUF</div>
<div class="t" style="left:905.5px;transform-origin:0 0;top:248.20px;font-size:10.5px;color:#1b1b1b;transform:scaleX(0.87);">03 - Áru beérkezett</div>
<div style="position:absolute;left:1018px;top:247px;width:12px;height:12px;background:#fff;border:1px solid #b5b5b5"></div>
<div style="position:absolute;left:1075px;top:247px;width:12px;height:12px;background:#fff;border:1px solid #b5b5b5"></div>
<svg style="position:absolute;left:1075px;top:247px" width="12" height="12"><path d="M3 6 L5 8.5 L9 3" stroke="#111" stroke-width="1.5" fill="none"/></svg>
<div style="position:absolute;left:10.5px;top:261px;width:11px;height:11px;background:#fff;border:2px solid #1a1aff"></div>
<svg style="position:absolute;left:33.00px;top:260.20px" width="14.00" height="14.00"><circle cx="7.0" cy="7.0" r="7.0" fill="#e3c800"/><rect x="5.9" y="2.4499999999999997" width="2.2" height="6.6499999999999995" fill="#111"/><rect x="5.9" y="10.15" width="2.2" height="2.2" fill="#111"/></svg>
<div class="t" style="left:55.5px;transform-origin:0 0;top:262.80px;font-size:10.5px;color:#1b1b1b;transform:scaleX(0.87);">VR-2022/00002</div>
<div class="t" style="left:139.5px;transform-origin:0 0;top:262.80px;font-size:10.5px;color:#1b1b1b;transform:scaleX(0.87);">Barta Sándor</div>
<div class="t" style="left:-231.5px;width:1000px;text-align:center;transform-origin:50% 0;top:262.80px;font-size:10.5px;color:#1b1b1b;transform:scaleX(0.92);">2022.01.25.</div>
<div class="t" style="left:-167.5px;width:1000px;text-align:center;transform-origin:50% 0;top:262.80px;font-size:10.5px;color:#1b1b1b;transform:scaleX(0.92);">2022.03.03.</div>
<div class="t" style="left:368.5px;transform-origin:0 0;top:262.80px;font-size:10.5px;color:#1b1b1b;transform:scaleX(0.87);">Gyártásra lefoglalva</div>
<div class="t" style="left:458px;transform-origin:0 0;top:262.80px;font-size:10.5px;color:#1b1b1b;transform:scaleX(0.87);">VR-2022/00002</div>
<div class="t" style="left:661.5px;transform-origin:0 0;top:262.80px;font-size:10.5px;color:#1b1b1b;transform:scaleX(0.87);">átutalás</div>
<div class="t" style="left:726.8px;transform-origin:0 0;top:262.80px;font-size:10.5px;color:#1b1b1b;transform:scaleX(0.87);"></div>
<div style="position:absolute;left:785px;top:259.80px;width:82px;height:14px;overflow:hidden">
<div class="t" style="left:2.5px;transform-origin:0 0;top:3.00px;font-size:10.5px;color:#1b1b1b;transform:scaleX(0.87);">T01</div>
</div>
<div class="t" style="left:870px;transform-origin:0 0;top:262.80px;font-size:10.5px;color:#1b1b1b;transform:scaleX(0.87);">HUF</div>
<div class="t" style="left:905.5px;transform-origin:0 0;top:262.80px;font-size:10.5px;color:#1b1b1b;transform:scaleX(0.87);">01 - Rendelés</div>
<div style="position:absolute;left:1018px;top:261px;width:12px;height:12px;background:#fff;border:1px solid #b5b5b5"></div>
<div style="position:absolute;left:1075px;top:261px;width:12px;height:12px;background:#fff;border:1px solid #b5b5b5"></div>
<svg style="position:absolute;left:1075px;top:261px" width="12" height="12"><path d="M3 6 L5 8.5 L9 3" stroke="#111" stroke-width="1.5" fill="none"/></svg>
<div style="position:absolute;left:10.5px;top:276px;width:11px;height:11px;background:#fff;border:2px solid #1a1aff"></div>
<svg style="position:absolute;left:33.00px;top:274.90px" width="14.00" height="14.00"><circle cx="7.0" cy="7.0" r="7.0" fill="#e3c800"/><rect x="5.9" y="2.4499999999999997" width="2.2" height="6.6499999999999995" fill="#111"/><rect x="5.9" y="10.15" width="2.2" height="2.2" fill="#111"/></svg>
<div class="t" style="left:55.5px;transform-origin:0 0;top:277.50px;font-size:10.5px;color:#1b1b1b;transform:scaleX(0.87);">VR-2021/00094</div>
<div class="t" style="left:139.5px;transform-origin:0 0;top:277.50px;font-size:10.5px;color:#1b1b1b;transform:scaleX(0.87);">Barta Sándor</div>
<div class="t" style="left:-231.5px;width:1000px;text-align:center;transform-origin:50% 0;top:277.50px;font-size:10.5px;color:#1b1b1b;transform:scaleX(0.92);">2021.11.18.</div>
<div class="t" style="left:-167.5px;width:1000px;text-align:center;transform-origin:50% 0;top:277.50px;font-size:10.5px;color:#1b1b1b;transform:scaleX(0.92);">2021.11.28.</div>
<div class="t" style="left:368.5px;transform-origin:0 0;top:277.50px;font-size:10.5px;color:#1b1b1b;transform:scaleX(0.87);">Szállítói rendelés</div>
<div class="t" style="left:458px;transform-origin:0 0;top:277.50px;font-size:10.5px;color:#1b1b1b;transform:scaleX(0.87);">VA megjegyzés</div>
<div class="t" style="left:661.5px;transform-origin:0 0;top:277.50px;font-size:10.5px;color:#1b1b1b;transform:scaleX(0.87);">átutalás</div>
<div class="t" style="left:726.8px;transform-origin:0 0;top:277.50px;font-size:10.5px;color:#1b1b1b;transform:scaleX(0.87);"></div>
<div style="position:absolute;left:785px;top:274.50px;width:82px;height:14px;overflow:hidden">
<div class="t" style="left:2.5px;transform-origin:0 0;top:3.00px;font-size:10.5px;color:#1b1b1b;transform:scaleX(0.87);"></div>
</div>
<div class="t" style="left:870px;transform-origin:0 0;top:277.50px;font-size:10.5px;color:#1b1b1b;transform:scaleX(0.87);">HUF</div>
<div class="t" style="left:905.5px;transform-origin:0 0;top:277.50px;font-size:10.5px;color:#1b1b1b;transform:scaleX(0.87);">03 - Áru beérkezett</div>
<div style="position:absolute;left:1018px;top:276px;width:12px;height:12px;background:#fff;border:1px solid #b5b5b5"></div>
<div style="position:absolute;left:1075px;top:276px;width:12px;height:12px;background:#fff;border:1px solid #b5b5b5"></div>
<div style="position:absolute;left:10.5px;top:291px;width:11px;height:11px;background:#fff;border:2px solid #1a1aff"></div>
<svg style="position:absolute;left:33.00px;top:289.60px" width="14.00" height="14.00"><circle cx="7.0" cy="7.0" r="7.0" fill="#9b0a0a"/><rect x="5.9" y="2.4499999999999997" width="2.2" height="6.6499999999999995" fill="#fff"/><rect x="5.9" y="10.15" width="2.2" height="2.2" fill="#fff"/></svg>
<div class="t" style="left:55.5px;transform-origin:0 0;top:292.20px;font-size:10.5px;color:#1b1b1b;transform:scaleX(0.87);">VR-2021/00091</div>
<div class="t" style="left:139.5px;transform-origin:0 0;top:292.20px;font-size:10.5px;color:#1b1b1b;transform:scaleX(0.87);">Barta Sándor</div>
<div class="t" style="left:-231.5px;width:1000px;text-align:center;transform-origin:50% 0;top:292.20px;font-size:10.5px;color:#1b1b1b;transform:scaleX(0.92);">2021.10.13.</div>
<div class="t" style="left:-167.5px;width:1000px;text-align:center;transform-origin:50% 0;top:292.20px;font-size:10.5px;color:#1b1b1b;transform:scaleX(0.92);">2021.10.23.</div>
<div class="t" style="left:368.5px;transform-origin:0 0;top:292.20px;font-size:10.5px;color:#1b1b1b;transform:scaleX(0.87);">Feldolgozandó</div>
<div class="t" style="left:458px;transform-origin:0 0;top:292.20px;font-size:10.5px;color:#1b1b1b;transform:scaleX(0.87);"></div>
<div class="t" style="left:661.5px;transform-origin:0 0;top:292.20px;font-size:10.5px;color:#1b1b1b;transform:scaleX(0.87);">készpénz</div>
<div class="t" style="left:726.8px;transform-origin:0 0;top:292.20px;font-size:10.5px;color:#1b1b1b;transform:scaleX(0.87);"></div>
<div style="position:absolute;left:785px;top:289.20px;width:82px;height:14px;overflow:hidden">
<div class="t" style="left:2.5px;transform-origin:0 0;top:3.00px;font-size:10.5px;color:#1b1b1b;transform:scaleX(0.87);"></div>
</div>
<div class="t" style="left:870px;transform-origin:0 0;top:292.20px;font-size:10.5px;color:#1b1b1b;transform:scaleX(0.87);">HUF</div>
<div class="t" style="left:905.5px;transform-origin:0 0;top:292.20px;font-size:10.5px;color:#1b1b1b;transform:scaleX(0.87);">03 - Áru beérkezett</div>
<div style="position:absolute;left:1018px;top:291px;width:12px;height:12px;background:#fff;border:1px solid #b5b5b5"></div>
<div style="position:absolute;left:1075px;top:291px;width:12px;height:12px;background:#fff;border:1px solid #b5b5b5"></div>
<div style="position:absolute;left:10.5px;top:305px;width:11px;height:11px;background:#fff;border:2px solid #1a1aff"></div>
<svg style="position:absolute;left:33.00px;top:304.20px" width="14.00" height="14.00"><circle cx="7.0" cy="7.0" r="7.0" fill="#9b0a0a"/><rect x="5.9" y="2.4499999999999997" width="2.2" height="6.6499999999999995" fill="#fff"/><rect x="5.9" y="10.15" width="2.2" height="2.2" fill="#fff"/></svg>
<div class="t" style="left:55.5px;transform-origin:0 0;top:306.80px;font-size:10.5px;color:#1b1b1b;transform:scaleX(0.87);">VR-2021/00090</div>
<div class="t" style="left:139.5px;transform-origin:0 0;top:306.80px;font-size:10.5px;color:#1b1b1b;transform:scaleX(0.87);">Zoltán Petri</div>
<div class="t" style="left:-231.5px;width:1000px;text-align:center;transform-origin:50% 0;top:306.80px;font-size:10.5px;color:#1b1b1b;transform:scaleX(0.92);">2021.10.11.</div>
<div class="t" style="left:-167.5px;width:1000px;text-align:center;transform-origin:50% 0;top:306.80px;font-size:10.5px;color:#1b1b1b;transform:scaleX(0.92);">2021.10.09.</div>
<div class="t" style="left:368.5px;transform-origin:0 0;top:306.80px;font-size:10.5px;color:#1b1b1b;transform:scaleX(0.87);">Feldolgozandó</div>
<div class="t" style="left:458px;transform-origin:0 0;top:306.80px;font-size:10.5px;color:#1b1b1b;transform:scaleX(0.87);">EXPORT Use importer</div>
<div class="t" style="left:661.5px;transform-origin:0 0;top:306.80px;font-size:10.5px;color:#1b1b1b;transform:scaleX(0.87);">készpénz</div>
<div class="t" style="left:726.8px;transform-origin:0 0;top:306.80px;font-size:10.5px;color:#1b1b1b;transform:scaleX(0.87);">Trans-o-flex</div>
<div style="position:absolute;left:785px;top:303.80px;width:82px;height:14px;overflow:hidden">
<div class="t" style="left:2.5px;transform-origin:0 0;top:3.00px;font-size:10.5px;color:#1b1b1b;transform:scaleX(0.87);">PCWEB63897</div>
</div>
<div class="t" style="left:870px;transform-origin:0 0;top:306.80px;font-size:10.5px;color:#1b1b1b;transform:scaleX(0.87);">EUR</div>
<div class="t" style="left:905.5px;transform-origin:0 0;top:306.80px;font-size:10.5px;color:#1b1b1b;transform:scaleX(0.87);">03 - Áru beérkezett</div>
<div style="position:absolute;left:1018px;top:305px;width:12px;height:12px;background:#fff;border:1px solid #b5b5b5"></div>
<div style="position:absolute;left:1075px;top:305px;width:12px;height:12px;background:#fff;border:1px solid #b5b5b5"></div>
<div style="position:absolute;left:10.5px;top:320px;width:11px;height:11px;background:#fff;border:2px solid #1a1aff"></div>
<svg style="position:absolute;left:33.00px;top:318.80px" width="14.00" height="14.00"><circle cx="7.0" cy="7.0" r="7.0" fill="#0b9a17"/><path d="M3.15 7.0 L5.95 9.799999999999999 L10.85 4.8999999999999995" stroke="#fff" stroke-width="2.2" fill="none"/></svg>
<div class="t" style="left:55.5px;transform-origin:0 0;top:321.40px;font-size:10.5px;color:#1b1b1b;transform:scaleX(0.87);">VR-2021/00085</div>
<div class="t" style="left:139.5px;transform-origin:0 0;top:321.40px;font-size:10.5px;color:#1b1b1b;transform:scaleX(0.87);">Kurd Község</div>
<div class="t" style="left:-231.5px;width:1000px;text-align:center;transform-origin:50% 0;top:321.40px;font-size:10.5px;color:#1b1b1b;transform:scaleX(0.92);">2021.09.30.</div>
<div class="t" style="left:-167.5px;width:1000px;text-align:center;transform-origin:50% 0;top:321.40px;font-size:10.5px;color:#1b1b1b;transform:scaleX(0.92);">2021.09.17.</div>
<div class="t" style="left:368.5px;transform-origin:0 0;top:321.40px;font-size:10.5px;color:#1b1b1b;transform:scaleX(0.87);">Foglalás</div>
<div class="t" style="left:458px;transform-origin:0 0;top:321.40px;font-size:10.5px;color:#1b1b1b;transform:scaleX(0.87);"></div>
<div class="t" style="left:661.5px;transform-origin:0 0;top:321.40px;font-size:10.5px;color:#1b1b1b;transform:scaleX(0.87);">átutalás</div>
<div class="t" style="left:726.8px;transform-origin:0 0;top:321.40px;font-size:10.5px;color:#1b1b1b;transform:scaleX(0.87);">Trans-o-flex</div>
<div style="position:absolute;left:785px;top:318.40px;width:82px;height:14px;overflow:hidden">
<div class="t" style="left:2.5px;transform-origin:0 0;top:3.00px;font-size:10.5px;color:#1b1b1b;transform:scaleX(0.87);">WEB27917</div>
</div>
<div class="t" style="left:870px;transform-origin:0 0;top:321.40px;font-size:10.5px;color:#1b1b1b;transform:scaleX(0.87);">HUF</div>
<div class="t" style="left:905.5px;transform-origin:0 0;top:321.40px;font-size:10.5px;color:#1b1b1b;transform:scaleX(0.87);">03 - Áru beérkezett</div>
<div style="position:absolute;left:1018px;top:320px;width:12px;height:12px;background:#fff;border:1px solid #b5b5b5"></div>
<div style="position:absolute;left:1075px;top:320px;width:12px;height:12px;background:#fff;border:1px solid #b5b5b5"></div>
<div style="position:absolute;left:562.00px;top:320.50px;width:1.00px;height:10.00px;background:#333"></div>
<div style="position:absolute;left:10.5px;top:334px;width:11px;height:11px;background:#fff;border:2px solid #1a1aff"></div>
<div style="position:absolute;left:10.50px;top:334.00px;width:11.00px;height:1.50px;background:#7f7fff"></div>
<div style="position:absolute;left:36.00px;top:333.80px;width:8.00px;height:1.70px;background:#3aa63a;border-radius:0 0 3px 3px"></div>
<div style="position:absolute;left:1114.00px;top:201.10px;width:15.00px;height:134.40px;background:#f0f0f0"></div>
<svg style="position:absolute;left:1117px;top:207px" width="9" height="6"><path d="M1.5 4.8 L4.5 1.5 L7.5 4.8" stroke="#505050" stroke-width="1.9" fill="none"/></svg>
<div style="position:absolute;left:1116.00px;top:216.00px;width:12.00px;height:14.00px;background:#cdcdcd"></div>
<svg style="position:absolute;left:1117px;top:325px" width="9" height="6"><path d="M1.5 1.2 L4.5 4.5 L7.5 1.2" stroke="#505050" stroke-width="1.9" fill="none"/></svg>
<div style="position:absolute;left:6.00px;top:335.50px;width:1123.00px;height:17.50px;background:#f0f0f0"></div>
<svg style="position:absolute;left:10px;top:339px" width="6" height="9"><path d="M4.8 1.5 L1.5 4.5 L4.8 7.5" stroke="#505050" stroke-width="1.9" fill="none"/></svg>
<div style="position:absolute;left:234.00px;top:337.00px;width:13.00px;height:12.50px;background:#cdcdcd"></div>
<svg style="position:absolute;left:1104px;top:339px" width="6" height="9"><path d="M1.2 1.5 L4.5 4.5 L1.2 7.5" stroke="#505050" stroke-width="1.9" fill="none"/></svg>
<div style="position:absolute;left:5.00px;top:353.00px;width:1124.00px;height:1.00px;background:#a0a0a0"></div>
<div style="position:absolute;left:5.00px;top:354.00px;width:1.00px;height:11.00px;background:#a0a0a0"></div>
<div style="position:absolute;left:5.00px;top:365.00px;width:1123.00px;height:1.00px;background:#fbfbfb"></div>
<div style="position:absolute;left:1127.00px;top:353.50px;width:1.00px;height:12.50px;background:#fbfbfb"></div>
<div style="position:absolute;left:1129.50px;top:40.50px;width:3.50px;height:524.50px;background:#f5f5f5"></div>
<div class="t" style="left:7.5px;transform-origin:0 0;top:354.70px;font-size:10.5px;color:#1b1b1b;transform:scaleX(0.905);">Megjelenített sor =127 | Nettó érték (HUF)=5 944 171,29</div>
<div style="position:absolute;left:5.00px;top:370.20px;width:1124.00px;height:153.30px;background:#f0f0f0;border-left:1px solid #a0a0a0;border-top:1px solid #a0a0a0"></div>
<div style="position:absolute;left:6.00px;top:399.90px;width:1123.00px;height:1.50px;background:#5e5e5e"></div>
<div style="position:absolute;left:17.60px;top:401.40px;width:1111.40px;height:14.00px;background:#fdfde1"></div>
<div style="position:absolute;left:17.60px;top:415.90px;width:1111.40px;height:14.20px;background:#fff"></div>
<div style="position:absolute;left:17.60px;top:430.60px;width:1111.40px;height:14.20px;background:#fdfde1"></div>
<div style="position:absolute;left:17.60px;top:445.30px;width:1111.40px;height:14.20px;background:#fff"></div>
<div style="position:absolute;left:17.60px;top:460.00px;width:1111.40px;height:14.10px;background:#fdfde1"></div>
<div style="position:absolute;left:17.60px;top:474.60px;width:1111.40px;height:14.20px;background:#fff"></div>
<div style="position:absolute;left:17.60px;top:489.30px;width:1111.40px;height:14.20px;background:#fdfde1"></div>
<div style="position:absolute;left:17.60px;top:414.90px;width:1111.40px;height:1.00px;background:#a7a7a7"></div>
<div style="position:absolute;left:6.00px;top:414.90px;width:11.60px;height:1.30px;background:#3a3a3a"></div>
<div style="position:absolute;left:17.60px;top:429.60px;width:1111.40px;height:1.00px;background:#a7a7a7"></div>
<div style="position:absolute;left:6.00px;top:429.60px;width:11.60px;height:1.30px;background:#3a3a3a"></div>
<div style="position:absolute;left:17.60px;top:444.30px;width:1111.40px;height:1.00px;background:#a7a7a7"></div>
<div style="position:absolute;left:6.00px;top:444.30px;width:11.60px;height:1.30px;background:#3a3a3a"></div>
<div style="position:absolute;left:17.60px;top:459.00px;width:1111.40px;height:1.00px;background:#a7a7a7"></div>
<div style="position:absolute;left:6.00px;top:459.00px;width:11.60px;height:1.30px;background:#3a3a3a"></div>
<div style="position:absolute;left:17.60px;top:473.60px;width:1111.40px;height:1.00px;background:#a7a7a7"></div>
<div style="position:absolute;left:6.00px;top:473.60px;width:11.60px;height:1.30px;background:#3a3a3a"></div>
<div style="position:absolute;left:17.60px;top:488.30px;width:1111.40px;height:1.00px;background:#a7a7a7"></div>
<div style="position:absolute;left:6.00px;top:488.30px;width:11.60px;height:1.30px;background:#3a3a3a"></div>
<div style="position:absolute;left:17.60px;top:503.00px;width:1111.40px;height:1.00px;background:#a7a7a7"></div>
<div style="position:absolute;left:6.00px;top:503.00px;width:11.60px;height:1.30px;background:#3a3a3a"></div>
<div style="position:absolute;left:16.60px;top:371.20px;width:1.00px;height:29.20px;background:#6a6a6a"></div>
<div style="position:absolute;left:16.30px;top:400.40px;width:1.30px;height:103.40px;background:#2a2a2a"></div>
<div style="position:absolute;left:39.00px;top:371.20px;width:1.00px;height:29.20px;background:#6a6a6a"></div>
<div style="position:absolute;left:39.00px;top:401.40px;width:1.00px;height:102.40px;background:#a7a7a7"></div>
<div style="position:absolute;left:64.10px;top:371.20px;width:1.00px;height:29.20px;background:#6a6a6a"></div>
<div style="position:absolute;left:64.10px;top:401.40px;width:1.00px;height:102.40px;background:#a7a7a7"></div>
<div style="position:absolute;left:93.90px;top:371.20px;width:1.00px;height:29.20px;background:#6a6a6a"></div>
<div style="position:absolute;left:93.90px;top:401.40px;width:1.00px;height:102.40px;background:#a7a7a7"></div>
<div style="position:absolute;left:160.80px;top:371.20px;width:1.00px;height:29.20px;background:#6a6a6a"></div>
<div style="position:absolute;left:160.80px;top:401.40px;width:1.00px;height:102.40px;background:#a7a7a7"></div>
<div style="position:absolute;left:290.00px;top:371.20px;width:1.00px;height:29.20px;background:#6a6a6a"></div>
<div style="position:absolute;left:290.00px;top:401.40px;width:1.00px;height:102.40px;background:#a7a7a7"></div>
<div style="position:absolute;left:348.60px;top:371.20px;width:1.00px;height:29.20px;background:#6a6a6a"></div>
<div style="position:absolute;left:348.60px;top:401.40px;width:1.00px;height:102.40px;background:#a7a7a7"></div>
<div style="position:absolute;left:376.50px;top:371.20px;width:1.00px;height:29.20px;background:#6a6a6a"></div>
<div style="position:absolute;left:376.50px;top:401.40px;width:1.00px;height:102.40px;background:#a7a7a7"></div>
<div style="position:absolute;left:463.50px;top:371.20px;width:1.00px;height:29.20px;background:#6a6a6a"></div>
<div style="position:absolute;left:463.50px;top:401.40px;width:1.00px;height:102.40px;background:#a7a7a7"></div>
<div style="position:absolute;left:556.30px;top:371.20px;width:1.00px;height:29.20px;background:#6a6a6a"></div>
<div style="position:absolute;left:556.30px;top:401.40px;width:1.00px;height:102.40px;background:#a7a7a7"></div>
<div style="position:absolute;left:643.30px;top:371.20px;width:1.00px;height:29.20px;background:#6a6a6a"></div>
<div style="position:absolute;left:643.30px;top:401.40px;width:1.00px;height:102.40px;background:#a7a7a7"></div>
<div style="position:absolute;left:740.30px;top:371.20px;width:1.00px;height:29.20px;background:#6a6a6a"></div>
<div style="position:absolute;left:740.30px;top:401.40px;width:1.00px;height:102.40px;background:#a7a7a7"></div>
<div style="position:absolute;left:810.70px;top:371.20px;width:1.00px;height:29.20px;background:#6a6a6a"></div>
<div style="position:absolute;left:810.70px;top:401.40px;width:1.00px;height:102.40px;background:#a7a7a7"></div>
<div style="position:absolute;left:877.10px;top:371.20px;width:1.00px;height:29.20px;background:#6a6a6a"></div>
<div style="position:absolute;left:877.10px;top:401.40px;width:1.00px;height:102.40px;background:#a7a7a7"></div>
<div style="position:absolute;left:978.50px;top:371.20px;width:1.00px;height:29.20px;background:#6a6a6a"></div>
<div style="position:absolute;left:978.50px;top:401.40px;width:1.00px;height:102.40px;background:#a7a7a7"></div>
<div style="position:absolute;left:1028.00px;top:371.20px;width:1.00px;height:29.20px;background:#6a6a6a"></div>
<div style="position:absolute;left:1028.00px;top:401.40px;width:1.00px;height:102.40px;background:#a7a7a7"></div>
<div style="position:absolute;left:1089.10px;top:371.20px;width:1.00px;height:29.20px;background:#6a6a6a"></div>
<div style="position:absolute;left:1089.10px;top:401.40px;width:1.00px;height:102.40px;background:#a7a7a7"></div>
<div class="t" style="left:20.5px;transform-origin:0 0;top:381.34px;font-size:10.8px;color:#111;font-weight:bold;transform:scaleX(0.96);">Kij.</div>
<div style="position:absolute;left:40px;top:371px;width:24px;height:29px;overflow:hidden">
<div class="t" style="left:2.5px;transform-origin:0 0;top:10.34px;font-size:10.8px;color:#111;font-weight:bold;transform:scaleX(0.96);">Ikon</div>
</div>
<div class="t" style="left:71px;transform-origin:0 0;top:381.34px;font-size:10.8px;color:#111;font-weight:bold;transform:scaleX(0.9);">S.sz.</div>
<svg style="position:absolute;left:86px;top:389px" width="7" height="5"><path d="M0.5 0.5 H6.5 L3.5 4Z" fill="#8a8a8a"/></svg>
<div style="position:absolute;left:97.5px;top:371px;width:63px;height:29px;overflow:hidden">
<div class="t" style="left:-1.5px;transform-origin:0 0;top:10.34px;font-size:10.8px;color:#111;font-weight:bold;transform:scaleX(0.96);">Cikkszám</div>
</div>
<div class="t" style="left:164.5px;transform-origin:0 0;top:381.34px;font-size:10.8px;color:#111;font-weight:bold;transform:scaleX(0.96);">Cikk megnevezés</div>
<div class="t" style="left:293px;transform-origin:0 0;top:381.34px;font-size:10.8px;color:#111;font-weight:bold;transform:scaleX(0.96);">Mennyiség</div>
<div class="t" style="left:352px;transform-origin:0 0;top:381.34px;font-size:10.8px;color:#111;font-weight:bold;transform:scaleX(0.96);">M.e.</div>
<div class="t" style="left:379.5px;transform-origin:0 0;top:381.34px;font-size:10.8px;color:#111;font-weight:bold;transform:scaleX(0.96);">Egységár (HUF)</div>
<div class="t" style="left:466.5px;transform-origin:0 0;top:381.34px;font-size:10.8px;color:#111;font-weight:bold;transform:scaleX(0.96);">Legkorábbi fázis</div>
<div class="t" style="left:559.5px;transform-origin:0 0;top:375.84px;font-size:10.8px;color:#111;font-weight:bold;transform:scaleX(0.96);">Sor megjegyzés</div>
<div class="t" style="left:559.5px;transform-origin:0 0;top:386.24px;font-size:10.8px;color:#111;font-weight:bold;transform:scaleX(0.96);">[F12]</div>
<div class="t" style="left:646.5px;transform-origin:0 0;top:375.84px;font-size:10.8px;color:#111;font-weight:bold;transform:scaleX(0.96);">Belső megjegyzés</div>
<div class="t" style="left:646.5px;transform-origin:0 0;top:386.24px;font-size:10.8px;color:#111;font-weight:bold;transform:scaleX(0.96);">[F12]</div>
<div class="t" style="left:743.5px;transform-origin:0 0;top:375.84px;font-size:10.8px;color:#111;font-weight:bold;transform:scaleX(0.96);">Esedékes</div>
<div class="t" style="left:743.5px;transform-origin:0 0;top:386.24px;font-size:10.8px;color:#111;font-weight:bold;transform:scaleX(0.96);">(vevői)</div>
<div class="t" style="left:814px;transform-origin:0 0;top:381.34px;font-size:10.8px;color:#111;font-weight:bold;transform:scaleX(0.96);">Beérkezés</div>
<div class="t" style="left:880.5px;transform-origin:0 0;top:381.34px;font-size:10.8px;color:#111;font-weight:bold;transform:scaleX(0.96);">Szállító</div>
<div class="t" style="left:982px;transform-origin:0 0;top:381.34px;font-size:10.8px;color:#111;font-weight:bold;transform:scaleX(0.96);">Foglalva</div>
<div class="t" style="left:1031.5px;transform-origin:0 0;top:375.84px;font-size:10.8px;color:#111;font-weight:bold;transform:scaleX(0.96);">Szállítótól</div>
<div class="t" style="left:1031.5px;transform-origin:0 0;top:386.24px;font-size:10.8px;color:#111;font-weight:bold;transform:scaleX(0.96);">rendelve</div>
<div class="t" style="left:1092.5px;transform-origin:0 0;top:381.34px;font-size:10.8px;color:#111;font-weight:bold;transform:scaleX(0.96);">Tárolás</div>
<div style="position:absolute;left:22.5px;top:402px;width:11px;height:11px;background:#fff;border:2px solid #1a1aff"></div>
<svg style="position:absolute;left:46.30px;top:401.30px" width="14.00" height="14.00"><circle cx="7.0" cy="7.0" r="7.0" fill="#9b0a0a"/><rect x="5.9" y="2.4499999999999997" width="2.2" height="6.6499999999999995" fill="#fff"/><rect x="5.9" y="10.15" width="2.2" height="2.2" fill="#fff"/></svg>
<div class="t" style="left:-908.5px;width:1000px;text-align:right;transform-origin:100% 0;top:403.90px;font-size:10.5px;color:#1b1b1b;transform:scaleX(0.87);">1</div>
<div style="position:absolute;left:97.5px;top:400.90px;width:63px;height:14px;overflow:hidden">
<div class="t" style="left:-4px;transform-origin:0 0;top:3.00px;font-size:10.5px;color:#1b1b1b;transform:scaleX(0.87);">Tesztcikk1</div>
</div>
<div class="t" style="left:164.5px;transform-origin:0 0;top:403.90px;font-size:10.5px;color:#1b1b1b;transform:scaleX(0.87);">Teszt cikk1</div>
<div class="t" style="left:-653px;width:1000px;text-align:right;transform-origin:100% 0;top:403.90px;font-size:10.5px;color:#1b1b1b;transform:scaleX(0.87);">1,00</div>
<div class="t" style="left:352px;transform-origin:0 0;top:403.90px;font-size:10.5px;color:#1b1b1b;transform:scaleX(0.87);">db</div>
<div class="t" style="left:-538px;width:1000px;text-align:right;transform-origin:100% 0;top:403.90px;font-size:10.5px;color:#1b1b1b;transform:scaleX(0.87);">780,31</div>
<div class="t" style="left:466.5px;transform-origin:0 0;top:403.90px;font-size:10.5px;color:#1b1b1b;transform:scaleX(0.87);">Feldolgozandó</div>
<div class="t" style="left:276px;width:1000px;text-align:center;transform-origin:50% 0;top:403.90px;font-size:10.5px;color:#1b1b1b;transform:scaleX(0.92);">2022.02.11.</div>
<div class="t" style="left:26px;width:1000px;text-align:right;transform-origin:100% 0;top:403.90px;font-size:10.5px;color:#1b1b1b;transform:scaleX(0.87);">0,00</div>
<div class="t" style="left:86.5px;width:1000px;text-align:right;transform-origin:100% 0;top:403.90px;font-size:10.5px;color:#1b1b1b;transform:scaleX(0.87);">0,00</div>
<div style="position:absolute;left:1090px;top:400.90px;width:39px;height:14px;overflow:hidden">
<div class="t" style="left:2.5px;transform-origin:0 0;top:3.00px;font-size:10.5px;color:#1b1b1b;transform:scaleX(0.87);">A-008</div>
</div>
<div style="position:absolute;left:22.5px;top:417px;width:11px;height:11px;background:#fff;border:2px solid #1a1aff"></div>
<svg style="position:absolute;left:46.30px;top:415.80px" width="14.00" height="14.00"><circle cx="7.0" cy="7.0" r="7.0" fill="#9b0a0a"/><rect x="5.9" y="2.4499999999999997" width="2.2" height="6.6499999999999995" fill="#fff"/><rect x="5.9" y="10.15" width="2.2" height="2.2" fill="#fff"/></svg>
<div class="t" style="left:-908.5px;width:1000px;text-align:right;transform-origin:100% 0;top:418.40px;font-size:10.5px;color:#1b1b1b;transform:scaleX(0.87);">2</div>
<div style="position:absolute;left:97.5px;top:415.40px;width:63px;height:14px;overflow:hidden">
<div class="t" style="left:-4px;transform-origin:0 0;top:3.00px;font-size:10.5px;color:#1b1b1b;transform:scaleX(0.87);">Tesztcikk2</div>
</div>
<div class="t" style="left:164.5px;transform-origin:0 0;top:418.40px;font-size:10.5px;color:#1b1b1b;transform:scaleX(0.87);">Teszt cikk2</div>
<div class="t" style="left:-653px;width:1000px;text-align:right;transform-origin:100% 0;top:418.40px;font-size:10.5px;color:#1b1b1b;transform:scaleX(0.87);">100,00</div>
<div class="t" style="left:352px;transform-origin:0 0;top:418.40px;font-size:10.5px;color:#1b1b1b;transform:scaleX(0.87);">db</div>
<div class="t" style="left:-538px;width:1000px;text-align:right;transform-origin:100% 0;top:418.40px;font-size:10.5px;color:#1b1b1b;transform:scaleX(0.87);">4,77</div>
<div class="t" style="left:466.5px;transform-origin:0 0;top:418.40px;font-size:10.5px;color:#1b1b1b;transform:scaleX(0.87);">Feldolgozandó</div>
<div class="t" style="left:276px;width:1000px;text-align:center;transform-origin:50% 0;top:418.40px;font-size:10.5px;color:#1b1b1b;transform:scaleX(0.92);">2022.02.11.</div>
<div class="t" style="left:26px;width:1000px;text-align:right;transform-origin:100% 0;top:418.40px;font-size:10.5px;color:#1b1b1b;transform:scaleX(0.87);">0,00</div>
<div class="t" style="left:86.5px;width:1000px;text-align:right;transform-origin:100% 0;top:418.40px;font-size:10.5px;color:#1b1b1b;transform:scaleX(0.87);">0,00</div>
<div style="position:absolute;left:1090px;top:415.40px;width:39px;height:14px;overflow:hidden">
<div class="t" style="left:2.5px;transform-origin:0 0;top:3.00px;font-size:10.5px;color:#1b1b1b;transform:scaleX(0.87);">A-009</div>
</div>
<div style="position:absolute;left:22.5px;top:432px;width:11px;height:11px;background:#fff;border:2px solid #1a1aff"></div>
<svg style="position:absolute;left:46.30px;top:430.50px" width="14.00" height="14.00"><circle cx="7.0" cy="7.0" r="7.0" fill="#9b0a0a"/><rect x="5.9" y="2.4499999999999997" width="2.2" height="6.6499999999999995" fill="#fff"/><rect x="5.9" y="10.15" width="2.2" height="2.2" fill="#fff"/></svg>
<div class="t" style="left:-908.5px;width:1000px;text-align:right;transform-origin:100% 0;top:433.10px;font-size:10.5px;color:#1b1b1b;transform:scaleX(0.87);">3</div>
<div style="position:absolute;left:97.5px;top:430.10px;width:63px;height:14px;overflow:hidden">
<div class="t" style="left:-4px;transform-origin:0 0;top:3.00px;font-size:10.5px;color:#1b1b1b;transform:scaleX(0.87);">Tesztcikk3</div>
</div>
<div class="t" style="left:164.5px;transform-origin:0 0;top:433.10px;font-size:10.5px;color:#1b1b1b;transform:scaleX(0.87);">Teszt cikk3</div>
<div class="t" style="left:-653px;width:1000px;text-align:right;transform-origin:100% 0;top:433.10px;font-size:10.5px;color:#1b1b1b;transform:scaleX(0.87);">100,00</div>
<div class="t" style="left:352px;transform-origin:0 0;top:433.10px;font-size:10.5px;color:#1b1b1b;transform:scaleX(0.87);">db</div>
<div class="t" style="left:-538px;width:1000px;text-align:right;transform-origin:100% 0;top:433.10px;font-size:10.5px;color:#1b1b1b;transform:scaleX(0.87);">4,92</div>
<div class="t" style="left:466.5px;transform-origin:0 0;top:433.10px;font-size:10.5px;color:#1b1b1b;transform:scaleX(0.87);">Feldolgozandó</div>
<div class="t" style="left:276px;width:1000px;text-align:center;transform-origin:50% 0;top:433.10px;font-size:10.5px;color:#1b1b1b;transform:scaleX(0.92);">2022.02.11.</div>
<div class="t" style="left:26px;width:1000px;text-align:right;transform-origin:100% 0;top:433.10px;font-size:10.5px;color:#1b1b1b;transform:scaleX(0.87);">0,00</div>
<div class="t" style="left:86.5px;width:1000px;text-align:right;transform-origin:100% 0;top:433.10px;font-size:10.5px;color:#1b1b1b;transform:scaleX(0.87);">0,00</div>
<div style="position:absolute;left:1090px;top:430.10px;width:39px;height:14px;overflow:hidden">
<div class="t" style="left:2.5px;transform-origin:0 0;top:3.00px;font-size:10.5px;color:#1b1b1b;transform:scaleX(0.87);">A polc 8</div>
</div>
<div style="position:absolute;left:22.5px;top:446px;width:11px;height:11px;background:#fff;border:2px solid #1a1aff"></div>
<svg style="position:absolute;left:46.30px;top:445.20px" width="14.00" height="14.00"><circle cx="7.0" cy="7.0" r="7.0" fill="#9b0a0a"/><rect x="5.9" y="2.4499999999999997" width="2.2" height="6.6499999999999995" fill="#fff"/><rect x="5.9" y="10.15" width="2.2" height="2.2" fill="#fff"/></svg>
<div class="t" style="left:-908.5px;width:1000px;text-align:right;transform-origin:100% 0;top:447.80px;font-size:10.5px;color:#1b1b1b;transform:scaleX(0.87);">4</div>
<div style="position:absolute;left:97.5px;top:444.80px;width:63px;height:14px;overflow:hidden">
<div class="t" style="left:-4px;transform-origin:0 0;top:3.00px;font-size:10.5px;color:#1b1b1b;transform:scaleX(0.87);">Tesztcikk4</div>
</div>
<div class="t" style="left:164.5px;transform-origin:0 0;top:447.80px;font-size:10.5px;color:#1b1b1b;transform:scaleX(0.87);">Teszt cikk4 (Pax toll)</div>
<div class="t" style="left:-653px;width:1000px;text-align:right;transform-origin:100% 0;top:447.80px;font-size:10.5px;color:#1b1b1b;transform:scaleX(0.87);">100,00</div>
<div class="t" style="left:352px;transform-origin:0 0;top:447.80px;font-size:10.5px;color:#1b1b1b;transform:scaleX(0.87);">db</div>
<div class="t" style="left:-538px;width:1000px;text-align:right;transform-origin:100% 0;top:447.80px;font-size:10.5px;color:#1b1b1b;transform:scaleX(0.87);">5,69</div>
<div class="t" style="left:466.5px;transform-origin:0 0;top:447.80px;font-size:10.5px;color:#1b1b1b;transform:scaleX(0.87);">Feldolgozandó</div>
<div class="t" style="left:276px;width:1000px;text-align:center;transform-origin:50% 0;top:447.80px;font-size:10.5px;color:#1b1b1b;transform:scaleX(0.92);">2022.02.11.</div>
<div class="t" style="left:26px;width:1000px;text-align:right;transform-origin:100% 0;top:447.80px;font-size:10.5px;color:#1b1b1b;transform:scaleX(0.87);">0,00</div>
<div class="t" style="left:86.5px;width:1000px;text-align:right;transform-origin:100% 0;top:447.80px;font-size:10.5px;color:#1b1b1b;transform:scaleX(0.87);">0,00</div>
<div style="position:absolute;left:1090px;top:444.80px;width:39px;height:14px;overflow:hidden">
<div class="t" style="left:2.5px;transform-origin:0 0;top:3.00px;font-size:10.5px;color:#1b1b1b;transform:scaleX(0.87);">B-009</div>
</div>
<div style="position:absolute;left:22.5px;top:461px;width:11px;height:11px;background:#fff;border:2px solid #1a1aff"></div>
<svg style="position:absolute;left:46.30px;top:459.90px" width="14.00" height="14.00"><circle cx="7.0" cy="7.0" r="7.0" fill="#9b0a0a"/><rect x="5.9" y="2.4499999999999997" width="2.2" height="6.6499999999999995" fill="#fff"/><rect x="5.9" y="10.15" width="2.2" height="2.2" fill="#fff"/></svg>
<div class="t" style="left:-908.5px;width:1000px;text-align:right;transform-origin:100% 0;top:462.50px;font-size:10.5px;color:#1b1b1b;transform:scaleX(0.87);">5</div>
<div style="position:absolute;left:97.5px;top:459.50px;width:63px;height:14px;overflow:hidden">
<div class="t" style="left:-4px;transform-origin:0 0;top:3.00px;font-size:10.5px;color:#1b1b1b;transform:scaleX(0.87);">Tesztcikk5</div>
</div>
<div class="t" style="left:164.5px;transform-origin:0 0;top:462.50px;font-size:10.5px;color:#1b1b1b;transform:scaleX(0.87);">Teszt cikk 5</div>
<div class="t" style="left:-653px;width:1000px;text-align:right;transform-origin:100% 0;top:462.50px;font-size:10.5px;color:#1b1b1b;transform:scaleX(0.87);">200,00</div>
<div class="t" style="left:352px;transform-origin:0 0;top:462.50px;font-size:10.5px;color:#1b1b1b;transform:scaleX(0.87);">db</div>
<div class="t" style="left:-538px;width:1000px;text-align:right;transform-origin:100% 0;top:462.50px;font-size:10.5px;color:#1b1b1b;transform:scaleX(0.87);">6,15</div>
<div class="t" style="left:466.5px;transform-origin:0 0;top:462.50px;font-size:10.5px;color:#1b1b1b;transform:scaleX(0.87);">Feldolgozandó</div>
<div class="t" style="left:276px;width:1000px;text-align:center;transform-origin:50% 0;top:462.50px;font-size:10.5px;color:#1b1b1b;transform:scaleX(0.92);">2022.02.11.</div>
<div class="t" style="left:26px;width:1000px;text-align:right;transform-origin:100% 0;top:462.50px;font-size:10.5px;color:#1b1b1b;transform:scaleX(0.87);">0,00</div>
<div class="t" style="left:86.5px;width:1000px;text-align:right;transform-origin:100% 0;top:462.50px;font-size:10.5px;color:#1b1b1b;transform:scaleX(0.87);">0,00</div>
<div style="position:absolute;left:1090px;top:459.50px;width:39px;height:14px;overflow:hidden">
<div class="t" style="left:2.5px;transform-origin:0 0;top:3.00px;font-size:10.5px;color:#1b1b1b;transform:scaleX(0.87);">B polc 12</div>
</div>
<div style="position:absolute;left:22.5px;top:476px;width:11px;height:11px;background:#fff;border:2px solid #1a1aff"></div>
<svg style="position:absolute;left:46.30px;top:474.50px" width="14.00" height="14.00"><circle cx="7.0" cy="7.0" r="7.0" fill="#9b0a0a"/><rect x="5.9" y="2.4499999999999997" width="2.2" height="6.6499999999999995" fill="#fff"/><rect x="5.9" y="10.15" width="2.2" height="2.2" fill="#fff"/></svg>
<div class="t" style="left:-908.5px;width:1000px;text-align:right;transform-origin:100% 0;top:477.10px;font-size:10.5px;color:#1b1b1b;transform:scaleX(0.87);">6</div>
<div style="position:absolute;left:97.5px;top:474.10px;width:63px;height:14px;overflow:hidden">
<div class="t" style="left:-4px;transform-origin:0 0;top:3.00px;font-size:10.5px;color:#1b1b1b;transform:scaleX(0.87);">Tesztcikk6</div>
</div>
<div class="t" style="left:164.5px;transform-origin:0 0;top:477.10px;font-size:10.5px;color:#1b1b1b;transform:scaleX(0.87);">Teszt cikk 6 - csak telephelyes</div>
<div class="t" style="left:-653px;width:1000px;text-align:right;transform-origin:100% 0;top:477.10px;font-size:10.5px;color:#1b1b1b;transform:scaleX(0.87);">100,00</div>
<div class="t" style="left:352px;transform-origin:0 0;top:477.10px;font-size:10.5px;color:#1b1b1b;transform:scaleX(0.87);">db</div>
<div class="t" style="left:-538px;width:1000px;text-align:right;transform-origin:100% 0;top:477.10px;font-size:10.5px;color:#1b1b1b;transform:scaleX(0.87);">11,54</div>
<div class="t" style="left:466.5px;transform-origin:0 0;top:477.10px;font-size:10.5px;color:#1b1b1b;transform:scaleX(0.87);">Feldolgozandó</div>
<div class="t" style="left:276px;width:1000px;text-align:center;transform-origin:50% 0;top:477.10px;font-size:10.5px;color:#1b1b1b;transform:scaleX(0.92);">2022.02.11.</div>
<div class="t" style="left:26px;width:1000px;text-align:right;transform-origin:100% 0;top:477.10px;font-size:10.5px;color:#1b1b1b;transform:scaleX(0.87);">0,00</div>
<div class="t" style="left:86.5px;width:1000px;text-align:right;transform-origin:100% 0;top:477.10px;font-size:10.5px;color:#1b1b1b;transform:scaleX(0.87);">0,00</div>
<div style="position:absolute;left:1090px;top:474.10px;width:39px;height:14px;overflow:hidden">
<div class="t" style="left:2.5px;transform-origin:0 0;top:3.00px;font-size:10.5px;color:#1b1b1b;transform:scaleX(0.87);"></div>
</div>
<div style="position:absolute;left:22.5px;top:490px;width:11px;height:11px;background:#fff;border:2px solid #1a1aff"></div>
<svg style="position:absolute;left:46.30px;top:489.20px" width="14.00" height="14.00"><path d="M3.8500000000000005 3.5 A5.46 5.46 0 1 1 2.1 8.4" stroke="#7a4a1a" stroke-width="1.5" fill="none"/><path d="M7.3500000000000005 3.8500000000000005 V7.3500000000000005 L10.15 9.799999999999999" stroke="#7a4a1a" stroke-width="1.4" fill="none"/><path d="M0.35000000000000003 1.75 L5.95 2.4499999999999997 L1.4000000000000001 7.0Z" fill="#7a4a1a"/></svg>
<div class="t" style="left:-908.5px;width:1000px;text-align:right;transform-origin:100% 0;top:491.80px;font-size:10.5px;color:#1b1b1b;transform:scaleX(0.87);">7</div>
<div style="position:absolute;left:97.5px;top:488.80px;width:63px;height:14px;overflow:hidden">
<div class="t" style="left:-4.5px;transform-origin:0 0;top:3.00px;font-size:10.5px;color:#1b1b1b;transform:scaleX(0.87);">SZOLGSZALL</div>
</div>
<div class="t" style="left:164.5px;transform-origin:0 0;top:491.80px;font-size:10.5px;color:#1b1b1b;transform:scaleX(0.87);">Szállítási díj</div>
<div class="t" style="left:-653px;width:1000px;text-align:right;transform-origin:100% 0;top:491.80px;font-size:10.5px;color:#1b1b1b;transform:scaleX(0.87);">1,00</div>
<div class="t" style="left:352px;transform-origin:0 0;top:491.80px;font-size:10.5px;color:#1b1b1b;transform:scaleX(0.87);">db</div>
<div class="t" style="left:-538px;width:1000px;text-align:right;transform-origin:100% 0;top:491.80px;font-size:10.5px;color:#1b1b1b;transform:scaleX(0.87);">1 365,35</div>
<div class="t" style="left:466.5px;transform-origin:0 0;top:491.80px;font-size:10.5px;color:#1b1b1b;transform:scaleX(0.87);">Feldolgozandó</div>
<div class="t" style="left:276px;width:1000px;text-align:center;transform-origin:50% 0;top:491.80px;font-size:10.5px;color:#1b1b1b;transform:scaleX(0.92);">2022.02.28.</div>
<div class="t" style="left:26px;width:1000px;text-align:right;transform-origin:100% 0;top:491.80px;font-size:10.5px;color:#1b1b1b;transform:scaleX(0.87);">0,00</div>
<div class="t" style="left:86.5px;width:1000px;text-align:right;transform-origin:100% 0;top:491.80px;font-size:10.5px;color:#1b1b1b;transform:scaleX(0.87);">0,00</div>
<div style="position:absolute;left:1090px;top:488.80px;width:39px;height:14px;overflow:hidden">
<div class="t" style="left:2.5px;transform-origin:0 0;top:3.00px;font-size:10.5px;color:#1b1b1b;transform:scaleX(0.87);"></div>
</div>
<div style="position:absolute;left:162.50px;top:401.80px;width:127.00px;height:12.80px;border:1px dotted #333"></div>
<div style="position:absolute;left:6.00px;top:503.90px;width:1123.00px;height:19.60px;background:#f0f0f0"></div>
<svg style="position:absolute;left:10px;top:509px" width="6" height="9"><path d="M4.8 1.5 L1.5 4.5 L4.8 7.5" stroke="#505050" stroke-width="1.9" fill="none"/></svg>
<div style="position:absolute;left:20.00px;top:509.50px;width:15.00px;height:12.20px;background:#cdcdcd"></div>
<svg style="position:absolute;left:1104px;top:509px" width="6" height="9"><path d="M1.2 1.5 L4.5 4.5 L1.2 7.5" stroke="#505050" stroke-width="1.9" fill="none"/></svg>
<div style="position:absolute;left:1.00px;top:524.00px;width:1132.00px;height:1.00px;background:#f7f7f7"></div>
<div style="position:absolute;left:1.00px;top:531.40px;width:1132.00px;height:1.60px;background:#f9f9f9"></div>
<div style="position:absolute;left:1.00px;top:533.00px;width:1132.00px;height:32.40px;background:#f0f0f0"></div>
<div style="position:absolute;left:105.00px;top:534.20px;width:1.10px;height:28.60px;background:#a9a9a9"></div>
<div style="position:absolute;left:198.50px;top:534.20px;width:1.10px;height:28.60px;background:#a9a9a9"></div>
<div style="position:absolute;left:292.50px;top:534.20px;width:1.10px;height:28.60px;background:#a9a9a9"></div>
<div style="position:absolute;left:387.00px;top:534.20px;width:1.10px;height:28.60px;background:#a9a9a9"></div>
<div style="position:absolute;left:480.60px;top:534.20px;width:1.10px;height:28.60px;background:#a9a9a9"></div>
<div style="position:absolute;left:587.50px;top:534.20px;width:1.10px;height:28.60px;background:#a9a9a9"></div>
<div style="position:absolute;left:681.00px;top:534.20px;width:1.10px;height:28.60px;background:#a9a9a9"></div>
<div style="position:absolute;left:775.10px;top:534.20px;width:1.10px;height:28.60px;background:#a9a9a9"></div>
<div style="position:absolute;left:882.00px;top:534.20px;width:1.10px;height:28.60px;background:#a9a9a9"></div>
<div style="position:absolute;left:989.00px;top:534.20px;width:1.10px;height:28.60px;background:#a9a9a9"></div>
<div style="position:absolute;left:1083.00px;top:534.20px;width:1.10px;height:28.60px;background:#a9a9a9"></div>
<svg style="position:absolute;left:39px;top:535px" width="14" height="14"><path d="M4.5 3.6 A4.7 4.7 0 1 1 1.8 8.2" stroke="#2aa52a" stroke-width="1.7" fill="none"/><path d="M2.2 0.6 L2.2 5 L6.4 4.6Z" fill="#1e9a1e"/></svg>
<div class="t" style="left:-454.4px;width:1000px;text-align:center;transform-origin:50% 0;top:550.70px;font-size:10.5px;color:#1f1f1f;transform:scaleX(0.95);">Frissít (F4)</div>
<svg style="position:absolute;left:91.8px;top:547px" width="7" height="5"><path d="M0 0.3 H6.6 L3.3 4Z" fill="#111"/></svg>
<svg style="position:absolute;left:146.00px;top:535.90px" width="12.40" height="12.40"><circle cx="6.2" cy="6.2" r="6.2" fill="#0b9a17"/><path d="M2.79 6.2 L5.27 8.68 L9.610000000000001 4.34" stroke="#fff" stroke-width="2.2" fill="none"/></svg>
<div class="t" style="left:-348px;width:1000px;text-align:center;transform-origin:50% 0;top:550.70px;font-size:10.5px;color:#1f1f1f;transform:scaleX(0.95);">Rendben</div>
<svg style="position:absolute;left:239.5px;top:537px" width="13" height="10"><path d="M0.5 4.5 C0.5 1.5 3 0.3 6 0.3 C9.5 0.3 12 3 12.5 9.5 L3 9.5 C1.5 9 0.5 7 0.5 4.5Z" fill="#7b3f00"/><path d="M6.5 3.2 L9.5 4.5 L9 5.3 L6 4.2Z" fill="#f0e0d0"/></svg>
<div class="t" style="left:-253.5px;width:1000px;text-align:center;transform-origin:50% 0;top:550.70px;font-size:10.5px;color:#1f1f1f;transform:scaleX(0.95);">Gyors javaslat</div>
<svg style="position:absolute;left:334.5px;top:536.5px" width="12" height="11"><rect x="0.8" y="0.8" width="10.4" height="7.4" fill="none" stroke="#7b3f00" stroke-width="1.6"/><circle cx="6" cy="4.5" r="1.8" fill="#7b3f00"/><rect x="3" y="9" width="6" height="1.6" fill="#7b3f00"/></svg>
<div class="t" style="left:-159.39999999999998px;width:1000px;text-align:center;transform-origin:50% 0;top:550.70px;font-size:10.5px;color:#1f1f1f;transform:scaleX(0.95);">Beállítás</div>
<svg style="position:absolute;left:427.5px;top:537px" width="13" height="11"><rect x="0" y="0" width="7.5" height="8" fill="#7b3f00"/><path d="M8 2 H11 L12.8 4.5 V8 H8Z" fill="#7b3f00"/><rect x="9.3" y="3" width="1.8" height="1.8" fill="#f0f0f0"/><circle cx="3" cy="9" r="1.6" fill="#7b3f00"/><circle cx="10" cy="9" r="1.6" fill="#7b3f00"/></svg>
<div class="t" style="left:-66.30000000000001px;width:1000px;text-align:center;transform-origin:50% 0;top:550.70px;font-size:10.5px;color:#1f1f1f;transform:scaleX(0.95);">Kiszállítás</div>
<svg style="position:absolute;left:522px;top:536.5px" width="12" height="11"><path d="M3 0.8 H11 L9 10 H1Z" fill="none" stroke="#7b3f00" stroke-width="1.5"/><path d="M4.5 3 H9 M4 5 H8.5 M3.5 7 H8" stroke="#7b3f00" stroke-width="0.9"/></svg>
<div class="t" style="left:28.600000000000023px;width:1000px;text-align:center;transform-origin:50% 0;top:550.70px;font-size:10.5px;color:#1f1f1f;transform:scaleX(0.95);">Számla</div>
<svg style="position:absolute;left:574px;top:547px" width="7" height="5"><path d="M0 0.3 H6.6 L3.3 4Z" fill="#111"/></svg>
<svg style="position:absolute;left:628.8px;top:537px" width="13" height="10"><rect x="0" y="0" width="7.5" height="8" fill="#7b3f00"/><path d="M8 1 H11 L12.8 3.5 V8 H8Z" fill="#7b3f00"/><path d="M3.8 1.8 V6.2 M1.6 4 H6" stroke="#f0f0f0" stroke-width="1.5"/><rect x="9.3" y="2.5" width="1.8" height="1.8" fill="#f0f0f0"/><circle cx="3" cy="8.6" r="1.4" fill="#7b3f00"/><circle cx="10" cy="8.6" r="1.4" fill="#7b3f00"/></svg>
<div class="t" style="left:134.60000000000002px;width:1000px;text-align:center;transform-origin:50% 0;top:550.70px;font-size:10.5px;color:#1f1f1f;transform:scaleX(0.95);">Kiszállítás+számla</div>
<svg style="position:absolute;left:725px;top:536px" width="8" height="12"><path d="M4 11.5 L0.8 5 A3.6 3.6 0 1 1 7.2 5Z" fill="#7b3f00"/><circle cx="4" cy="3.8" r="1.3" fill="#f0f0f0"/></svg>
<div class="t" style="left:229px;width:1000px;text-align:center;transform-origin:50% 0;top:550.70px;font-size:10.5px;color:#1f1f1f;transform:scaleX(0.95);">Térkép</div>
<div style="position:absolute;left:778.50px;top:532.50px;width:86.50px;height:32.70px;border:1px solid #d5d5d5;border-top-color:#fbfbfb;border-left-color:#fbfbfb;background:#f0f0f0"></div>
<div style="position:absolute;left:865.00px;top:532.50px;width:14.00px;height:32.70px;border:1px solid #c0c0c0;border-top-color:#fbfbfb;border-left-color:#e0e0e0;background:#f0f0f0"></div>
<svg style="position:absolute;left:816.5px;top:536px" width="13" height="13"><rect x="1" y="1" width="11" height="11" fill="none" stroke="#7b3f00" stroke-width="1.8"/><path d="M4.2 4.2 L8.8 8.8 M8.8 4.2 L4.2 8.8" stroke="#7b3f00" stroke-width="1.6"/></svg>
<div class="t" style="left:322.5px;width:1000px;text-align:center;transform-origin:50% 0;top:550.70px;font-size:10.5px;color:#1f1f1f;transform:scaleX(0.95);">Export</div>
<svg style="position:absolute;left:868.5px;top:548px" width="7" height="5"><path d="M0 0.3 H6.6 L3.3 4Z" fill="#111"/></svg>
<svg style="position:absolute;left:923.5px;top:536px" width="13" height="13"><rect x="0.8" y="0.8" width="11.4" height="11.4" fill="none" stroke="#7b3f00" stroke-width="1.4"/><rect x="0.8" y="0.8" width="11.4" height="2" fill="#7b3f00"/><path d="M4.6 3 V12 M8.4 3 V12 M1 6 H12 M1 9 H12" stroke="#7b3f00" stroke-width="0.8" opacity=".85"/></svg>
<div class="t" style="left:429.6px;width:1000px;text-align:center;transform-origin:50% 0;top:550.70px;font-size:10.5px;color:#1f1f1f;transform:scaleX(0.95);">Oszlop</div>
<svg style="position:absolute;left:976px;top:547px" width="7" height="5"><path d="M0 0.3 H6.6 L3.3 4Z" fill="#111"/></svg>
<svg style="position:absolute;left:1030.5px;top:537px" width="13" height="11"><path d="M1.5 1 L11.5 10 M11.5 1 L1.5 10" stroke="#f08c00" stroke-width="2.6"/></svg>
<div class="t" style="left:536.4000000000001px;width:1000px;text-align:center;transform-origin:50% 0;top:550.70px;font-size:10.5px;color:#1f1f1f;transform:scaleX(0.95);">Bezár (Esc)</div>
<div style="position:absolute;left:0.00px;top:569.20px;width:1138.00px;height:19.80px;background:#f0f0f0"></div>
<div style="position:absolute;left:132.50px;top:569.50px;width:1.10px;height:18.50px;background:#404040"></div>
<div style="position:absolute;left:0.00px;top:589.00px;width:1138.00px;height:2.00px;background:#eef3fa"></div>
<div style="position:absolute;left:1040.00px;top:569.50px;width:98.00px;height:19.50px;background:#ffffc6"></div>
<div class="t" style="left:1051px;transform-origin:0 0;top:565.75px;font-size:11.5px;color:#2a2a2a;transform:scaleX(0.9);">lezárva!</div>
<div style="position:absolute;left:0.00px;top:565.40px;width:1138.00px;height:3.90px;background:#69b8ea"></div>
<div style="position:absolute;left:779.50px;top:565.50px;width:255.50px;height:25.50px;background:#f0f0f0;border:1px solid #979797;box-shadow:2px 2px 2px rgba(0,0,0,.35)"></div>
<div style="position:absolute;left:782.00px;top:568.00px;width:249.00px;height:23.00px;background:#d5e6f7;border:1px solid #a8cff2"></div>
<div style="position:absolute;left:806.00px;top:569.00px;width:1.00px;height:22.00px;background:#b9d3ec"></div>
<div class="t" style="left:810.3px;transform-origin:0 0;top:571.27px;font-size:11px;color:#1a1a1a;transform:scaleX(0.895);">Fej és tétel adatok exportálása Excel-be</div>
<div style="position:absolute;left:477.00px;top:80.50px;width:103.00px;height:52.50px;border:4px solid #ff0000;box-shadow:1px 2px 2px rgba(0,0,0,.35), inset 1px 2px 2px rgba(0,0,0,.25)"></div>
<div style="position:absolute;left:65.20px;top:364.10px;width:35.70px;height:153.70px;border:4px solid #ff0000;box-shadow:1px 2px 2px rgba(0,0,0,.35), inset 1px 2px 2px rgba(0,0,0,.25)"></div>
<div style="position:absolute;left:772.00px;top:556.20px;width:270.00px;height:32.50px;border:4px solid #ff0000;box-shadow:1px 2px 2px rgba(0,0,0,.35), inset 1px 2px 2px rgba(0,0,0,.25)"></div>
</body></html>
